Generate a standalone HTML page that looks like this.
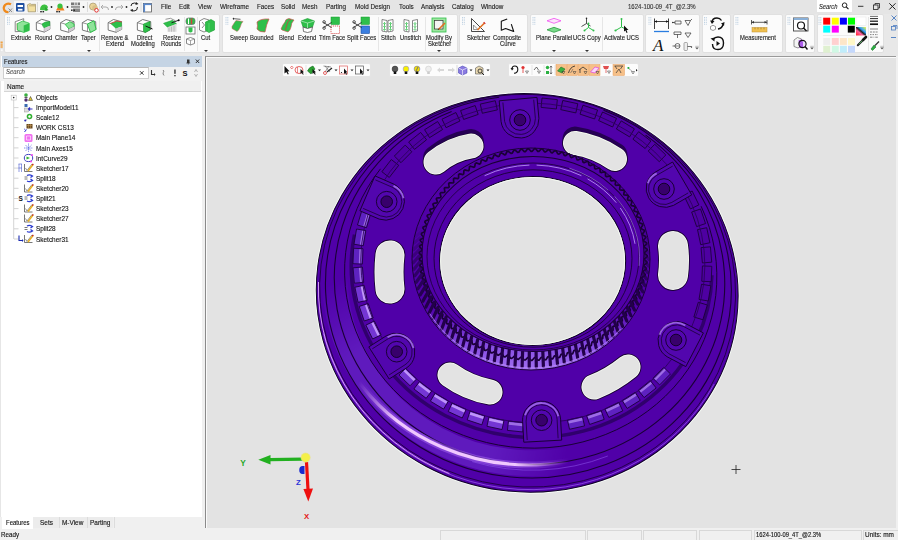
<!DOCTYPE html>
<html><head><meta charset="utf-8">
<style>
*{margin:0;padding:0;box-sizing:border-box}
html,body{width:898px;height:540px;overflow:hidden;background:#f0f0f0;font-family:"Liberation Sans",sans-serif;color:#222}
body{position:relative}
.a{position:absolute}
.t{position:absolute;white-space:nowrap;font-size:7px;line-height:8px;color:#111;-webkit-text-stroke:0.12px #111;transform:scaleX(.92);transform-origin:0 0}
.m{position:absolute;white-space:nowrap;font-size:7px;line-height:8px;color:#1a1a1a;-webkit-text-stroke:0.12px #1a1a1a;top:3.2px;transform:scaleX(.9);transform-origin:0 0}
.rl{position:absolute;white-space:nowrap;font-size:6.7px;line-height:8px;color:#1a1a1a;-webkit-text-stroke:0.12px #1a1a1a;transform:scaleX(.88);transform-origin:0 0}
#top{left:0;top:0;width:898px;height:14px;background:#e5e5e5}
#ribbon{left:0;top:13.5px;width:898px;height:42.5px;background:#e8e8e8}
.pn{position:absolute;top:14.3px;height:38.6px;background:#fbfbfb;border:1px solid #e0e0e0;border-radius:2px}
.sep{position:absolute;width:1px;background:#e6e6e6}
.grip{position:absolute;top:17px;width:3px;height:8px;border-left:1px dotted #9ab;border-right:1px dotted #9ab}
.dd{position:absolute;width:0;height:0;border-left:2px solid transparent;border-right:2px solid transparent;border-top:2px solid #333}
#panel{left:0;top:56px;width:202px;height:461px;background:#fff;border-left:1px solid #e6e6e6}
#vp{left:204.5px;top:56px;width:691.5px;height:472.5px;background:#e3e3e3;border-left:1.6px solid #8a8a8a;border-top:1.6px solid #9a9a9a;box-shadow:inset 1px 1px 0 #fafafa}
#status{left:0;top:528px;width:898px;height:12px;background:#f0f0f0}
.tree .t{left:35.5px}
.cell{position:absolute;top:530px;height:10px;border:1px solid #d8d8d8;border-bottom:none;background:#f0f0f0}
.tb{position:absolute;top:63px;height:14px;background:#fcfcfc;border:1px solid #e4e4e4;border-radius:2px}
</style></head><body>
<div id="top" class="a"></div>
<div id="ribbon" class="a"></div>
<div id="panel" class="a"></div>
<div id="vp" class="a"></div>
<div id="status" class="a"></div>

<!-- top menu -->
<div class="a" style="left:14px;top:1px;width:138px;height:12px;background:#f6f6f6"></div>
<div class="m" style="left:161.2px">File</div>
<div class="m" style="left:179px">Edit</div>
<div class="m" style="left:197.8px">View</div>
<div class="m" style="left:219.6px">Wireframe</div>
<div class="m" style="left:257px">Faces</div>
<div class="m" style="left:280.8px">Solid</div>
<div class="m" style="left:302.4px">Mesh</div>
<div class="m" style="left:326px">Parting</div>
<div class="m" style="left:354.5px">Mold Design</div>
<div class="m" style="left:399px">Tools</div>
<div class="m" style="left:420.6px">Analysis</div>
<div class="m" style="left:451.8px">Catalog</div>
<div class="m" style="left:481.4px">Window</div>
<div class="m" style="left:628.4px;font-size:6.7px;color:#444">1624-100-09_4T_@2.3%</div>
<div class="a" style="left:817px;top:0;width:35px;height:12px;background:#fff"></div>
<div class="m" style="left:818.6px;font-size:6.45px;font-style:italic;color:#333">Search</div>

<!-- ribbon panels -->
<div class="pn" style="left:4px;width:216px"></div>
<div class="pn" style="left:221.6px;width:236px"></div>
<div class="pn" style="left:459.4px;width:68.5px"></div>
<div class="pn" style="left:529.5px;width:114px"></div>
<div class="pn" style="left:645.3px;width:54.5px"></div>
<div class="pn" style="left:701.6px;width:29px"></div>
<div class="pn" style="left:733.1px;width:49.5px"></div>
<div class="pn" style="left:784.8px;width:30.4px"></div>
<div class="pn" style="left:817px;width:67px"></div>
<div class="sep" style="left:98.6px;top:17px;height:34px"></div>
<div class="sep" style="left:183.6px;top:17px;height:34px"></div>
<div class="sep" style="left:196.7px;top:17px;height:34px"></div>
<div class="sep" style="left:377.9px;top:17px;height:34px"></div>
<div class="sep" style="left:424.7px;top:17px;height:34px"></div>
<div class="sep" style="left:602.1px;top:17px;height:34px"></div>
<div class="sep" style="left:868px;top:17px;height:34px"></div>

<div class="rl" style="left:11.4px;top:33.8px">Extrude</div>
<div class="rl" style="left:34.5px;top:33.8px">Round</div>
<div class="rl" style="left:54.8px;top:33.8px">Chamfer</div>
<div class="rl" style="left:81.3px;top:33.8px">Taper</div>
<div class="rl" style="left:100.8px;top:33.8px">Remove &amp;</div>
<div class="rl" style="left:105.9px;top:40.3px">Extend</div>
<div class="rl" style="left:136.7px;top:33.8px">Direct</div>
<div class="rl" style="left:131.2px;top:40.3px">Modeling</div>
<div class="rl" style="left:162.7px;top:33.8px">Resize</div>
<div class="rl" style="left:160.8px;top:40.3px">Rounds</div>
<div class="rl" style="left:201.4px;top:33.8px">Cut</div>
<div class="rl" style="left:229.6px;top:33.8px">Sweep</div>
<div class="rl" style="left:250px;top:33.8px">Bounded</div>
<div class="rl" style="left:278.8px;top:33.8px">Blend</div>
<div class="rl" style="left:297.9px;top:33.8px">Extend</div>
<div class="rl" style="left:319.3px;top:33.8px">Trim Face</div>
<div class="rl" style="left:347.2px;top:33.8px">Split Faces</div>
<div class="rl" style="left:380.8px;top:33.8px">Stitch</div>
<div class="rl" style="left:399.6px;top:33.8px">Unstitch</div>
<div class="rl" style="left:426.1px;top:33.8px">Modify By</div>
<div class="rl" style="left:427.6px;top:40.3px">Sketcher</div>
<div class="rl" style="left:466.6px;top:33.8px">Sketcher</div>
<div class="rl" style="left:492.9px;top:33.8px">Composite</div>
<div class="rl" style="left:499.9px;top:40.3px">Curve</div>
<div class="rl" style="left:536px;top:33.8px">Plane Parallel</div>
<div class="rl" style="left:572.9px;top:33.8px">UCS Copy</div>
<div class="rl" style="left:604.4px;top:33.8px">Activate UCS</div>
<div class="rl" style="left:740px;top:33.8px">Measurement</div>

<div class="dd" style="left:41.5px;top:50px"></div>
<div class="dd" style="left:87px;top:50px"></div>
<div class="dd" style="left:204px;top:50px"></div>
<div class="dd" style="left:437px;top:50px"></div>
<div class="dd" style="left:552px;top:50px"></div>
<div class="dd" style="left:585px;top:50px"></div>

<!-- features panel -->
<div class="a" style="left:1.5px;top:56.3px;width:200.4px;height:10.4px;background:#c5d4e4"></div>
<div class="t" style="left:3.7px;top:57.8px;font-size:6.5px;color:#1a1a1a">Features</div>
<div class="a" style="left:0;top:66.7px;width:202px;height:14.5px;background:#f2f2f2"></div>
<div class="a" style="left:2.5px;top:67.3px;width:146px;height:11.5px;background:#fff;border:1px solid #cfcfcf;border-top-color:#b8b8b8"></div>
<div class="t" style="left:5.5px;top:68.3px;font-size:6.5px;font-style:italic;color:#777">Search</div>
<div class="a" style="left:3.7px;top:81.4px;width:197px;height:10.4px;background:#f0f0f0;border-bottom:1px solid #d5d5d5"></div>
<div class="t" style="left:6.7px;top:83px;font-size:7px;color:#1a1a1a">Name</div>

<div class="tree">
<div class="t" style="top:94.1px">Objects</div>
<div class="t" style="top:104.2px">ImportModel11</div>
<div class="t" style="top:114.4px">Scale12</div>
<div class="t" style="top:124.2px">WORK CS13</div>
<div class="t" style="top:134.3px">Main Plane14</div>
<div class="t" style="top:144.5px">Main Axes15</div>
<div class="t" style="top:154.6px">IntCurve29</div>
<div class="t" style="top:164.7px">Sketcher17</div>
<div class="t" style="top:174.8px">Split18</div>
<div class="t" style="top:184.9px">Sketcher20</div>
<div class="t" style="top:195.1px">Split21</div>
<div class="t" style="top:205.2px">Sketcher23</div>
<div class="t" style="top:215.3px">Sketcher27</div>
<div class="t" style="top:225.4px">Split28</div>
<div class="t" style="top:235.6px">Sketcher31</div>
</div>

<!-- bottom tabs -->
<div class="a" style="left:1.8px;top:517px;width:31.5px;height:11.5px;background:#fff"></div>
<div class="a" style="left:33.3px;top:517px;width:80.2px;height:11px;background:#ececec"></div>
<div class="a" style="left:58.9px;top:517px;width:1px;height:11px;background:#dcdcdc"></div>
<div class="a" style="left:86.5px;top:517px;width:1px;height:11px;background:#dcdcdc"></div>
<div class="a" style="left:113.5px;top:517px;width:1px;height:11px;background:#dcdcdc"></div>
<div class="t" style="left:5.9px;top:519px;font-size:6.5px">Features</div>
<div class="t" style="left:39.6px;top:519px;font-size:7px">Sets</div>
<div class="t" style="left:61.6px;top:519px;font-size:7px">M-View</div>
<div class="t" style="left:90px;top:519px;font-size:7px">Parting</div>

<!-- status bar -->
<div class="t" style="left:1.3px;top:531px;font-size:6.8px">Ready</div>
<div class="cell" style="left:440px;width:146px"></div>
<div class="cell" style="left:587px;width:55px"></div>
<div class="cell" style="left:643px;width:54px"></div>
<div class="cell" style="left:699px;width:53px"></div>
<div class="cell" style="left:753.7px;width:108px"></div>
<div class="cell" style="left:863px;width:40px"></div>
<div class="t" style="left:755.8px;top:531px;font-size:6.3px">1624-100-09_4T_@2.3%</div>
<div class="t" style="left:865px;top:531px;font-size:7px">Units: mm</div>

<!-- view toolbars -->
<div class="tb" style="left:282.2px;width:89px"></div>
<div class="tb" style="left:388.9px;width:102px"></div>
<div class="tb" style="left:508px;width:131px"></div>

<svg class="a" style="left:0;top:0" width="898" height="540" viewBox="0 0 898 540">
<ellipse cx="527.2" cy="292.9" rx="212.0" ry="200.0" transform="rotate(7.40 527.2 292.9)" fill="none" stroke="#f8fff8" stroke-width="1.1" opacity="0.9"/>
<ellipse cx="527.2" cy="292.9" rx="211.1" ry="199.1" transform="rotate(7.40 527.2 292.9)" fill="#5000a8" stroke="#12002a" stroke-width="1"/>
<path d="M714.1 384.1A209.6 197.6 7.36 0 1 323.4 333.6" fill="none" stroke="#9a60f0" stroke-width="0.9" opacity="0.8"/>
<defs><linearGradient id="wg" x1="0" y1="0" x2="1" y2="1"><stop offset="0" stop-color="#6a24c8" stop-opacity="0"/><stop offset="0.45" stop-color="#6a24c8" stop-opacity="0.9"/><stop offset="0.8" stop-color="#5a14b4" stop-opacity="0.5"/><stop offset="1" stop-color="#5a14b4" stop-opacity="0"/></linearGradient></defs>
<defs><linearGradient id="wg2" x1="0" y1="0" x2="1" y2="0"><stop offset="0" stop-color="#7232d2" stop-opacity="0"/><stop offset="0.2" stop-color="#7232d2" stop-opacity="0.9"/><stop offset="0.75" stop-color="#7232d2" stop-opacity="0.9"/><stop offset="1" stop-color="#7232d2" stop-opacity="0"/></linearGradient></defs>
<defs><radialGradient id="mg" gradientUnits="userSpaceOnUse" cx="405" cy="430" r="165"><stop offset="0" stop-color="#fff"/><stop offset="0.55" stop-color="#fff"/><stop offset="1" stop-color="#000"/></radialGradient><mask id="mk" maskUnits="userSpaceOnUse" x="0" y="0" width="898" height="540"><rect width="898" height="540" fill="url(#mg)"/></mask><radialGradient id="mg2" gradientUnits="userSpaceOnUse" cx="455" cy="445" r="115"><stop offset="0" stop-color="#fff"/><stop offset="0.55" stop-color="#fff"/><stop offset="1" stop-color="#000"/></radialGradient><mask id="mk2" maskUnits="userSpaceOnUse" x="0" y="0" width="898" height="540"><rect width="898" height="540" fill="url(#mg2)"/></mask></defs>
<g mask="url(#mk)" opacity="0.6"><path d="M663.5 414.8A194.7 182.6 6.91 1 1 422.1 126.5" fill="none" stroke="#6a2ccc" stroke-width="26"/></g>
<ellipse cx="527.6" cy="290.7" rx="208.2" ry="196.2" transform="rotate(7.31 527.6 290.7)" fill="none" stroke="#1a0036" stroke-width="0.8"/>
<path d="M603.5 110.3A203.1 191.0 7.16 1 1 499.2 97.2" fill="none" stroke="#1a0036" stroke-width="1.1"/>
<path d="M645.6 135.1A195.4 183.3 6.93 1 1 451.6 111.6" fill="none" stroke="#1a0036" stroke-width="1.1"/>
<path d="M701.1 206.2A186.3 174.1 6.65 1 1 380.5 168.8" fill="none" stroke="#1a0036" stroke-width="1.0"/>
<g mask="url(#mk2)"><path d="M632.7 439.5A206.4 189.9 0.00 0 1 326.2 308.0" fill="none" stroke="#9a5ae8" stroke-width="7" opacity="0.6"/><path d="M632.7 439.5A206.4 189.9 0.00 0 1 326.2 308.0" fill="none" stroke="#f0c8ff" stroke-width="3.2"/></g>
<path d="M449.4 473.6A209.3 197.3 7.35 0 1 318.5 282.0" fill="none" stroke="#e8b0ff" stroke-width="1" opacity="0.85"/>
<path d="M607.8 456.0A198.7 186.6 7.03 0 1 472.2 461.6" fill="none" stroke="#8a50e8" stroke-width="1" opacity="0.6"/>
<path d="M711.9 275.2A180.5 168.2 6.48 1 1 354.5 234.6" fill="none" stroke="#30006c" stroke-width="3.5"/>
<g transform="translate(704.9 292.6) rotate(99.5)"><rect x="-7.7" y="-4.7" width="15.4" height="9.4" fill="#4e00a2" stroke="#1a0036" stroke-width="0.8"/></g>
<g transform="translate(700.6 311.0) rotate(106.7)"><rect x="-7.7" y="-4.7" width="15.4" height="9.4" fill="#4e00a2" stroke="#1a0036" stroke-width="0.8"/></g>
<g transform="translate(661.7 376.1) rotate(134.7)"><rect x="-7.7" y="-4.7" width="15.4" height="9.4" fill="#5e22c0" stroke="#1a0036" stroke-width="0.8"/><path d="M-7 2.4H7" stroke="#c8a0ff" stroke-width="2.6" opacity="0.6"/></g>
<g transform="translate(647.2 389.1) rotate(141.4)"><rect x="-7.7" y="-4.7" width="15.4" height="9.4" fill="#5e22c0" stroke="#1a0036" stroke-width="0.8"/><path d="M-7 2.4H7" stroke="#c8a0ff" stroke-width="2.6" opacity="0.6"/></g>
<g transform="translate(631.2 400.4) rotate(148.0)"><rect x="-7.7" y="-4.7" width="15.4" height="9.4" fill="#5e22c0" stroke="#1a0036" stroke-width="0.8"/><path d="M-7 2.4H7" stroke="#c8a0ff" stroke-width="2.6" opacity="0.6"/></g>
<g transform="translate(613.8 409.9) rotate(154.5)"><rect x="-7.7" y="-4.7" width="15.4" height="9.4" fill="#5e22c0" stroke="#1a0036" stroke-width="0.8"/><path d="M-7 2.4H7" stroke="#c8a0ff" stroke-width="2.6" opacity="0.6"/></g>
<g transform="translate(595.4 417.5) rotate(161.0)"><rect x="-7.7" y="-4.7" width="15.4" height="9.4" fill="#5e22c0" stroke="#1a0036" stroke-width="0.8"/><path d="M-7 2.4H7" stroke="#c8a0ff" stroke-width="2.6" opacity="0.6"/></g>
<g transform="translate(576.0 423.0) rotate(167.3)"><rect x="-7.7" y="-4.7" width="15.4" height="9.4" fill="#5e22c0" stroke="#1a0036" stroke-width="0.8"/><path d="M-7 2.4H7" stroke="#c8a0ff" stroke-width="2.6" opacity="0.6"/></g>
<g transform="translate(515.6 426.5) rotate(186.0)"><rect x="-7.7" y="-4.7" width="15.4" height="9.4" fill="#5e22c0" stroke="#1a0036" stroke-width="0.8"/><path d="M-7 2.4H7" stroke="#c8a0ff" stroke-width="2.6" opacity="0.6"/></g>
<g transform="translate(495.5 423.3) rotate(-167.8)"><rect x="-7.7" y="-4.7" width="15.4" height="9.4" fill="#7436d4" stroke="#1a0036" stroke-width="0.8"/><path d="M-7 2.4H7" stroke="#c8a0ff" stroke-width="2.6" opacity="0.9"/></g>
<g transform="translate(476.0 417.9) rotate(-161.6)"><rect x="-7.7" y="-4.7" width="15.4" height="9.4" fill="#7436d4" stroke="#1a0036" stroke-width="0.8"/><path d="M-7 2.4H7" stroke="#c8a0ff" stroke-width="2.6" opacity="0.9"/></g>
<g transform="translate(457.2 410.5) rotate(-155.3)"><rect x="-7.7" y="-4.7" width="15.4" height="9.4" fill="#7436d4" stroke="#1a0036" stroke-width="0.8"/><path d="M-7 2.4H7" stroke="#c8a0ff" stroke-width="2.6" opacity="0.9"/></g>
<g transform="translate(439.4 401.1) rotate(-149.0)"><rect x="-7.7" y="-4.7" width="15.4" height="9.4" fill="#7436d4" stroke="#1a0036" stroke-width="0.8"/><path d="M-7 2.4H7" stroke="#c8a0ff" stroke-width="2.6" opacity="0.9"/></g>
<g transform="translate(422.9 389.9) rotate(-142.6)"><rect x="-7.7" y="-4.7" width="15.4" height="9.4" fill="#7436d4" stroke="#1a0036" stroke-width="0.8"/><path d="M-7 2.4H7" stroke="#c8a0ff" stroke-width="2.6" opacity="0.9"/></g>
<g transform="translate(407.8 377.0) rotate(-136.1)"><rect x="-7.7" y="-4.7" width="15.4" height="9.4" fill="#7436d4" stroke="#1a0036" stroke-width="0.8"/><path d="M-7 2.4H7" stroke="#c8a0ff" stroke-width="2.6" opacity="0.9"/></g>
<g transform="translate(373.5 330.0) rotate(-115.9)"><rect x="-7.7" y="-4.7" width="15.4" height="9.4" fill="#7436d4" stroke="#1a0036" stroke-width="0.8"/><path d="M-7 2.4H7" stroke="#c8a0ff" stroke-width="2.6" opacity="0.9"/></g>
<g transform="translate(366.2 312.2) rotate(-108.9)"><rect x="-7.7" y="-4.7" width="15.4" height="9.4" fill="#7436d4" stroke="#1a0036" stroke-width="0.8"/><path d="M-7 2.4H7" stroke="#c8a0ff" stroke-width="2.6" opacity="0.9"/></g>
<g transform="translate(361.1 293.8) rotate(-101.9)"><rect x="-7.7" y="-4.7" width="15.4" height="9.4" fill="#7436d4" stroke="#1a0036" stroke-width="0.8"/><path d="M-7 2.4H7" stroke="#c8a0ff" stroke-width="2.6" opacity="0.9"/></g>
<g transform="translate(358.4 275.1) rotate(-94.8)"><rect x="-7.7" y="-4.7" width="15.4" height="9.4" fill="#5e22c0" stroke="#1a0036" stroke-width="0.8"/><path d="M-7 2.4H7" stroke="#c8a0ff" stroke-width="2.6" opacity="0.6"/></g>
<g transform="translate(358.0 256.2) rotate(-87.6)"><rect x="-7.7" y="-4.7" width="15.4" height="9.4" fill="#5e22c0" stroke="#1a0036" stroke-width="0.8"/><path d="M-7 2.4H7" stroke="#c8a0ff" stroke-width="2.6" opacity="0.6"/></g>
<g transform="translate(359.9 237.4) rotate(-80.5)"><rect x="-7.7" y="-4.7" width="15.4" height="9.4" fill="#5e22c0" stroke="#1a0036" stroke-width="0.8"/><path d="M-7 2.4H7" stroke="#c8a0ff" stroke-width="2.6" opacity="0.6"/></g>
<g transform="translate(364.2 219.0) rotate(-73.3)"><rect x="-7.7" y="-4.7" width="15.4" height="9.4" fill="#5e22c0" stroke="#1a0036" stroke-width="0.8"/><path d="M-7 2.4H7" stroke="#c8a0ff" stroke-width="2.6" opacity="0.6"/></g>
<g transform="translate(390.3 168.5) rotate(-52.2)"><rect x="-7.7" y="-4.7" width="15.4" height="9.4" fill="#4e00a2" stroke="#1a0036" stroke-width="0.8"/></g>
<g transform="translate(403.1 153.9) rotate(-45.3)"><rect x="-7.7" y="-4.7" width="15.4" height="9.4" fill="#4e00a2" stroke="#1a0036" stroke-width="0.8"/></g>
<g transform="translate(417.6 140.9) rotate(-38.6)"><rect x="-7.7" y="-4.7" width="15.4" height="9.4" fill="#4e00a2" stroke="#1a0036" stroke-width="0.8"/></g>
<g transform="translate(433.6 129.6) rotate(-32.0)"><rect x="-7.7" y="-4.7" width="15.4" height="9.4" fill="#4e00a2" stroke="#1a0036" stroke-width="0.8"/></g>
<g transform="translate(451.0 120.1) rotate(-25.5)"><rect x="-7.7" y="-4.7" width="15.4" height="9.4" fill="#4e00a2" stroke="#1a0036" stroke-width="0.8"/></g>
<g transform="translate(469.4 112.5) rotate(-19.0)"><rect x="-7.7" y="-4.7" width="15.4" height="9.4" fill="#4e00a2" stroke="#1a0036" stroke-width="0.8"/></g>
<g transform="translate(488.8 107.0) rotate(-12.7)"><rect x="-7.7" y="-4.7" width="15.4" height="9.4" fill="#4e00a2" stroke="#1a0036" stroke-width="0.8"/></g>
<g transform="translate(549.2 103.5) rotate(6.0)"><rect x="-7.7" y="-4.7" width="15.4" height="9.4" fill="#4e00a2" stroke="#1a0036" stroke-width="0.8"/></g>
<g transform="translate(569.3 106.7) rotate(12.2)"><rect x="-7.7" y="-4.7" width="15.4" height="9.4" fill="#4e00a2" stroke="#1a0036" stroke-width="0.8"/></g>
<g transform="translate(588.8 112.1) rotate(18.4)"><rect x="-7.7" y="-4.7" width="15.4" height="9.4" fill="#4e00a2" stroke="#1a0036" stroke-width="0.8"/></g>
<g transform="translate(607.6 119.5) rotate(24.7)"><rect x="-7.7" y="-4.7" width="15.4" height="9.4" fill="#4e00a2" stroke="#1a0036" stroke-width="0.8"/></g>
<g transform="translate(625.4 128.9) rotate(31.0)"><rect x="-7.7" y="-4.7" width="15.4" height="9.4" fill="#4e00a2" stroke="#1a0036" stroke-width="0.8"/></g>
<g transform="translate(641.9 140.1) rotate(37.4)"><rect x="-7.7" y="-4.7" width="15.4" height="9.4" fill="#4e00a2" stroke="#1a0036" stroke-width="0.8"/></g>
<g transform="translate(657.0 153.0) rotate(43.9)"><rect x="-7.7" y="-4.7" width="15.4" height="9.4" fill="#4e00a2" stroke="#1a0036" stroke-width="0.8"/></g>
<g transform="translate(691.3 200.0) rotate(64.1)"><rect x="-7.7" y="-4.7" width="15.4" height="9.4" fill="#4e00a2" stroke="#1a0036" stroke-width="0.8"/></g>
<g transform="translate(698.6 217.8) rotate(71.1)"><rect x="-7.7" y="-4.7" width="15.4" height="9.4" fill="#4e00a2" stroke="#1a0036" stroke-width="0.8"/></g>
<g transform="translate(703.7 236.2) rotate(78.1)"><rect x="-7.7" y="-4.7" width="15.4" height="9.4" fill="#4e00a2" stroke="#1a0036" stroke-width="0.8"/></g>
<g transform="translate(706.4 254.9) rotate(85.2)"><rect x="-7.7" y="-4.7" width="15.4" height="9.4" fill="#4e00a2" stroke="#1a0036" stroke-width="0.8"/></g>
<g transform="translate(706.8 273.8) rotate(92.4)"><rect x="-7.7" y="-4.7" width="15.4" height="9.4" fill="#4e00a2" stroke="#1a0036" stroke-width="0.8"/></g>
<ellipse cx="532.8" cy="263.0" rx="172.2" ry="159.8" transform="rotate(6.22 532.8 263.0)" fill="none" stroke="#2a005a" stroke-width="0.8"/>
<path d="M436 162Q452,149 471 146" stroke="#1a0036" stroke-width="26.8" stroke-linecap="round" fill="none"/>
<path d="M436 162Q452,149 471 146" stroke="#260054" stroke-width="26" stroke-linecap="round" fill="none" transform="translate(0 -4)"/>
<path d="M436 162Q452,149 471 146" stroke="#1a0036" stroke-width="25.8" stroke-linecap="round" fill="none"/>
<path d="M436 162Q452,149 471 146" stroke="#f6fbf2" stroke-width="25" stroke-linecap="round" fill="none"/>
<path d="M436 162Q452,149 471 146" stroke="#e3e3e3" stroke-width="23.4" stroke-linecap="round" fill="none"/>
<path d="M575 143Q596,146 615 159" stroke="#1a0036" stroke-width="25.8" stroke-linecap="round" fill="none"/>
<path d="M575 143Q596,146 615 159" stroke="#260054" stroke-width="25" stroke-linecap="round" fill="none" transform="translate(0 -4)"/>
<path d="M575 143Q596,146 615 159" stroke="#1a0036" stroke-width="24.8" stroke-linecap="round" fill="none"/>
<path d="M575 143Q596,146 615 159" stroke="#f6fbf2" stroke-width="24" stroke-linecap="round" fill="none"/>
<path d="M575 143Q596,146 615 159" stroke="#e3e3e3" stroke-width="22.4" stroke-linecap="round" fill="none"/>
<path d="M390 255Q388,272 390 289" stroke="#1a0036" stroke-width="30.8" stroke-linecap="round" fill="none"/>
<path d="M390 255Q388,272 390 289" stroke="#f6fbf2" stroke-width="29" stroke-linecap="round" fill="none"/>
<path d="M390 255Q388,272 390 289" stroke="#e3e3e3" stroke-width="27.4" stroke-linecap="round" fill="none"/>
<path d="M673 246Q675,260 673 275" stroke="#1a0036" stroke-width="31.8" stroke-linecap="round" fill="none"/>
<path d="M673 246Q675,260 673 275" stroke="#f6fbf2" stroke-width="30" stroke-linecap="round" fill="none"/>
<path d="M673 246Q675,260 673 275" stroke="#e3e3e3" stroke-width="28.4" stroke-linecap="round" fill="none"/>
<path d="M450 375Q468,388 490 392" stroke="#1a0036" stroke-width="26.8" stroke-linecap="round" fill="none"/>
<path d="M450 375Q468,388 490 392" stroke="#f6fbf2" stroke-width="25" stroke-linecap="round" fill="none"/>
<path d="M450 375Q468,388 490 392" stroke="#e3e3e3" stroke-width="23.4" stroke-linecap="round" fill="none"/>
<path d="M594 387Q612,380 628 367" stroke="#1a0036" stroke-width="26.8" stroke-linecap="round" fill="none"/>
<path d="M594 387Q612,380 628 367" stroke="#f6fbf2" stroke-width="25" stroke-linecap="round" fill="none"/>
<path d="M594 387Q612,380 628 367" stroke="#e3e3e3" stroke-width="23.4" stroke-linecap="round" fill="none"/>
<path d="M537.0 97.4L538.9 118.3A19 19 0 0 1 501.1 121.7L499.2 100.8Z" fill="#5206ae" stroke="#1a0036" stroke-width="1"/>
<path d="M533.7 99.7L535.4 118.6A15.5 15.5 0 0 1 504.6 121.4L502.9 102.5" fill="none" stroke="#1a0036" stroke-width="0.8"/>
<circle cx="520" cy="120" r="10.3" fill="none" stroke="#1a0036" stroke-width="1"/>
<circle cx="520" cy="120" r="5.8" fill="#38006c" stroke="#0e0020" stroke-width="0.9"/>
<path d="M375.0 175.9L394.2 184.3A19 19 0 0 1 379.2 219.1L359.9 210.8Z" fill="#5206ae" stroke="#1a0036" stroke-width="1"/>
<path d="M375.4 179.9L392.9 187.5A15.5 15.5 0 0 1 380.5 215.9L363.1 208.4" fill="none" stroke="#1a0036" stroke-width="0.8"/>
<path d="M393.5 185.9A17.2 17.2 0.00 0 1 403.5 198.2" fill="none" stroke="#b080f4" stroke-width="1.8" opacity="0.75"/>
<circle cx="386.7" cy="201.7" r="10.3" fill="none" stroke="#1a0036" stroke-width="1"/>
<circle cx="386.7" cy="201.7" r="5.8" fill="#38006c" stroke="#0e0020" stroke-width="0.9"/>
<path d="M691.7 194.9L673.5 205.4A19 19 0 0 1 654.5 172.6L672.6 162.0Z" fill="#5206ae" stroke="#1a0036" stroke-width="1"/>
<path d="M688.2 192.9L671.8 202.4A15.5 15.5 0 0 1 656.2 175.6L672.7 166.1" fill="none" stroke="#1a0036" stroke-width="0.8"/>
<path d="M647.8 183.2A17.2 17.2 0.00 0 1 656.7 173.4" fill="none" stroke="#b080f4" stroke-width="1.8" opacity="0.75"/>
<circle cx="664" cy="189" r="10.3" fill="none" stroke="#1a0036" stroke-width="1"/>
<circle cx="664" cy="189" r="5.8" fill="#38006c" stroke="#0e0020" stroke-width="0.9"/>
<path d="M368.8 346.9L386.5 335.7A19 19 0 0 1 406.9 367.7L389.2 379.0Z" fill="#5206ae" stroke="#1a0036" stroke-width="1"/>
<path d="M372.3 348.8L388.4 338.6A15.5 15.5 0 0 1 405.0 364.8L389.0 375.0" fill="none" stroke="#1a0036" stroke-width="0.8"/>
<path d="M387.5 337.2A17.2 17.2 0.00 0 1 413.5 348.0" fill="none" stroke="#b080f4" stroke-width="1.8" opacity="0.75"/>
<circle cx="396.7" cy="351.7" r="10.3" fill="none" stroke="#1a0036" stroke-width="1"/>
<circle cx="396.7" cy="351.7" r="5.8" fill="#38006c" stroke="#0e0020" stroke-width="0.9"/>
<path d="M685.8 366.6L667.2 356.8A19 19 0 0 1 684.8 323.2L703.4 332.9Z" fill="#5206ae" stroke="#1a0036" stroke-width="1"/>
<path d="M685.6 362.6L668.8 353.7A15.5 15.5 0 0 1 683.2 326.3L700.0 335.1" fill="none" stroke="#1a0036" stroke-width="0.8"/>
<path d="M659.6 334.8A17.2 17.2 0.00 0 1 685.3 325.5" fill="none" stroke="#b080f4" stroke-width="1.8" opacity="0.75"/>
<circle cx="676" cy="340" r="10.3" fill="none" stroke="#1a0036" stroke-width="1"/>
<circle cx="676" cy="340" r="5.8" fill="#38006c" stroke="#0e0020" stroke-width="0.9"/>
<path d="M523.8 442.2L522.6 421.3A19 19 0 0 1 560.6 419.1L561.7 440.1Z" fill="#5206ae" stroke="#1a0036" stroke-width="1"/>
<path d="M527.2 440.0L526.1 421.1A15.5 15.5 0 0 1 557.1 419.3L558.1 438.3" fill="none" stroke="#1a0036" stroke-width="0.8"/>
<path d="M525.1 415.2A17.2 17.2 0.00 0 1 558.3 416.3" fill="none" stroke="#b080f4" stroke-width="1.8" opacity="0.75"/>
<circle cx="541.6" cy="420.2" r="10.3" fill="none" stroke="#1a0036" stroke-width="1"/>
<circle cx="541.6" cy="420.2" r="5.8" fill="#38006c" stroke="#0e0020" stroke-width="0.9"/>
<defs><linearGradient id="gg" x1="0" y1="0" x2="0" y2="1"><stop offset="0" stop-color="#5000a8"/><stop offset="0.72" stop-color="#5000a8"/><stop offset="0.88" stop-color="#8448e2"/><stop offset="1" stop-color="#a070f0"/></linearGradient></defs>
<ellipse cx="531.0" cy="259.0" rx="119.0" ry="111.0" fill="url(#gg)" stroke="#1a0036" stroke-width="1"/>
<path d="M646.0 254.5L647.3 255.6L647.3 256.6L645.9 257.7L644.6 258.7L644.6 259.7L645.8 260.8L647.0 262.0L646.9 263.0L645.5 264.0L644.1 264.9L644.0 265.9L645.2 267.1L646.3 268.3L646.2 269.4L644.7 270.2L643.3 271.1L643.1 272.1L644.2 273.3L645.2 274.6L645.0 275.7L643.5 276.4L642.0 277.2L641.7 278.2L642.7 279.5L643.7 280.9L643.4 281.9L641.9 282.6L640.3 283.2L640.0 284.2L640.9 285.6L641.8 287.0L641.4 288.0L639.8 288.6L638.2 289.1L637.9 290.1L638.7 291.6L639.5 293.0L639.1 294.0L637.4 294.5L635.8 295.0L635.3 295.9L636.1 297.4L636.8 298.9L636.3 299.9L634.6 300.2L633.0 300.6L632.5 301.5L633.1 303.1L633.7 304.6L633.2 305.5L631.5 305.8L629.8 306.1L629.2 307.0L629.7 308.6L630.3 310.1L629.7 311.0L627.9 311.2L626.2 311.4L625.6 312.3L626.1 313.9L626.5 315.5L625.8 316.3L624.1 316.4L622.4 316.5L621.7 317.3L622.0 318.9L622.3 320.6L621.6 321.4L619.9 321.4L618.2 321.4L617.4 322.2L617.7 323.8L617.9 325.5L617.1 326.2L615.4 326.1L613.6 326.0L612.9 326.7L613.0 328.4L613.1 330.1L612.3 330.8L610.5 330.6L608.8 330.4L608.0 331.1L608.0 332.7L608.0 334.4L607.2 335.1L605.5 334.8L603.8 334.4L602.9 335.1L602.8 336.8L602.7 338.4L601.8 339.1L600.1 338.7L598.4 338.2L597.5 338.8L597.3 340.5L597.1 342.2L596.2 342.8L594.5 342.3L592.8 341.7L591.9 342.3L591.6 343.9L591.3 345.6L590.3 346.1L588.7 345.5L587.0 344.9L586.1 345.4L585.7 347.0L585.3 348.7L584.2 349.2L582.6 348.5L581.1 347.7L580.0 348.2L579.6 349.8L579.0 351.4L578.0 351.8L576.4 351.0L574.9 350.2L573.9 350.6L573.3 352.2L572.6 353.8L571.6 354.2L570.1 353.3L568.6 352.4L567.5 352.7L566.8 354.3L566.1 355.8L565.0 356.1L563.6 355.2L562.1 354.2L561.0 354.4L560.3 356.0L559.5 357.5L558.3 357.7L557.0 356.7L555.6 355.6L554.5 355.8L553.6 357.3L552.7 358.8L551.6 358.9L550.3 357.8L549.0 356.7L547.8 356.8L546.9 358.2L545.9 359.7L544.8 359.8L543.5 358.6L542.3 357.4L541.1 357.4L540.1 358.8L539.0 360.2L537.9 360.2L536.7 359.0L535.5 357.7L534.4 357.7L533.3 359.0L532.2 360.3L531.0 360.3L529.9 359.0L528.8 357.6L527.7 357.6L526.5 358.8L525.3 360.0L524.1 360.0L523.1 358.6L522.1 357.2L521.0 357.1L519.7 358.2L518.4 359.4L517.3 359.2L516.3 357.8L515.4 356.4L514.3 356.2L513.0 357.3L511.6 358.4L510.5 358.2L509.6 356.7L508.8 355.2L507.7 354.9L506.3 356.0L504.9 357.0L503.8 356.7L503.0 355.2L502.3 353.6L501.2 353.3L499.8 354.3L498.3 355.2L497.2 354.9L496.5 353.3L495.9 351.7L494.8 351.4L493.3 352.2L491.8 353.0L490.7 352.6L490.2 351.0L489.6 349.4L488.6 349.0L487.0 349.8L485.5 350.5L484.4 350.1L484.0 348.5L483.5 346.8L482.5 346.4L480.9 347.0L479.3 347.7L478.3 347.2L477.9 345.5L477.6 343.9L476.6 343.4L475.0 343.9L473.3 344.5L472.4 343.9L472.1 342.3L471.9 340.6L470.9 340.0L469.3 340.5L467.6 341.0L466.7 340.3L466.5 338.7L466.4 337.0L465.5 336.4L463.8 336.8L462.1 337.1L461.2 336.5L461.1 334.8L461.1 333.1L460.3 332.4L458.6 332.7L456.8 333.0L456.0 332.3L456.1 330.6L456.1 328.9L455.3 328.2L453.6 328.4L451.9 328.6L451.1 327.8L451.2 326.1L451.4 324.5L450.7 323.7L448.9 323.8L447.2 323.9L446.5 323.0L446.7 321.4L447.0 319.8L446.3 319.0L444.6 318.9L442.9 318.9L442.2 318.1L442.5 316.4L442.9 314.8L442.3 314.0L440.5 313.9L438.8 313.7L438.2 312.8L438.7 311.2L439.1 309.7L438.6 308.8L436.9 308.6L435.2 308.3L434.6 307.4L435.1 305.8L435.7 304.3L435.2 303.4L433.5 303.1L431.8 302.7L431.3 301.8L432.0 300.2L432.7 298.7L432.2 297.8L430.5 297.4L428.9 296.9L428.4 296.0L429.2 294.5L430.0 293.0L429.5 292.1L427.9 291.6L426.3 291.0L425.9 290.0L426.8 288.6L427.6 287.2L427.3 286.2L425.7 285.6L424.1 285.0L423.8 283.9L424.7 282.6L425.7 281.2L425.4 280.2L423.9 279.5L422.3 278.8L422.1 277.7L423.1 276.4L424.2 275.1L423.9 274.1L422.4 273.3L421.0 272.5L420.8 271.5L421.9 270.2L423.0 269.0L422.9 268.0L421.4 267.1L420.0 266.2L419.9 265.1L421.1 264.0L422.3 262.8L422.2 261.8L420.8 260.8L419.4 259.8L419.4 258.8L420.7 257.7L421.9 256.6L421.9 255.5L420.6 254.5L419.3 253.4L419.3 252.4L420.7 251.3L422.0 250.3L422.0 249.3L420.8 248.2L419.6 247.0L419.7 246.0L421.1 245.0L422.5 244.1L422.6 243.1L421.4 241.9L420.3 240.7L420.4 239.6L421.9 238.8L423.3 237.9L423.5 236.9L422.4 235.7L421.4 234.4L421.6 233.3L423.1 232.6L424.6 231.8L424.9 230.8L423.9 229.5L422.9 228.1L423.2 227.1L424.7 226.4L426.3 225.8L426.6 224.8L425.7 223.4L424.8 222.0L425.2 221.0L426.8 220.4L428.4 219.9L428.7 218.9L427.9 217.4L427.1 216.0L427.5 215.0L429.2 214.5L430.8 214.0L431.3 213.1L430.5 211.6L429.8 210.1L430.3 209.1L432.0 208.8L433.6 208.4L434.1 207.5L433.5 205.9L432.9 204.4L433.4 203.5L435.1 203.2L436.8 202.9L437.4 202.0L436.9 200.4L436.3 198.9L436.9 198.0L438.7 197.8L440.4 197.6L441.0 196.7L440.5 195.1L440.1 193.5L440.8 192.7L442.5 192.6L444.2 192.5L444.9 191.7L444.6 190.1L444.3 188.4L445.0 187.6L446.7 187.6L448.4 187.6L449.2 186.8L448.9 185.2L448.7 183.5L449.5 182.8L451.2 182.9L453.0 183.0L453.7 182.3L453.6 180.6L453.5 178.9L454.3 178.2L456.1 178.4L457.8 178.6L458.6 177.9L458.6 176.3L458.6 174.6L459.4 173.9L461.1 174.2L462.8 174.6L463.7 173.9L463.8 172.2L463.9 170.6L464.8 169.9L466.5 170.3L468.2 170.8L469.1 170.2L469.3 168.5L469.5 166.8L470.4 166.2L472.1 166.7L473.8 167.3L474.7 166.7L475.0 165.1L475.3 163.4L476.3 162.9L477.9 163.5L479.6 164.1L480.5 163.6L480.9 162.0L481.3 160.3L482.4 159.8L484.0 160.5L485.5 161.3L486.6 160.8L487.0 159.2L487.6 157.6L488.6 157.2L490.2 158.0L491.7 158.8L492.7 158.4L493.3 156.8L494.0 155.2L495.0 154.8L496.5 155.7L498.0 156.6L499.1 156.3L499.8 154.7L500.5 153.2L501.6 152.9L503.0 153.8L504.5 154.8L505.6 154.6L506.3 153.0L507.1 151.5L508.3 151.3L509.6 152.3L511.0 153.4L512.1 153.2L513.0 151.7L513.9 150.2L515.0 150.1L516.3 151.2L517.6 152.3L518.8 152.2L519.7 150.8L520.7 149.3L521.8 149.2L523.1 150.4L524.3 151.6L525.5 151.6L526.5 150.2L527.6 148.8L528.7 148.8L529.9 150.0L531.1 151.3L532.2 151.3L533.3 150.0L534.4 148.7L535.6 148.7L536.7 150.0L537.8 151.4L538.9 151.4L540.1 150.2L541.3 149.0L542.5 149.0L543.5 150.4L544.5 151.8L545.6 151.9L546.9 150.8L548.2 149.6L549.3 149.8L550.3 151.2L551.2 152.6L552.3 152.8L553.6 151.7L555.0 150.6L556.1 150.8L557.0 152.3L557.8 153.8L558.9 154.1L560.3 153.0L561.7 152.0L562.8 152.3L563.6 153.8L564.3 155.4L565.4 155.7L566.8 154.7L568.3 153.8L569.4 154.1L570.1 155.7L570.7 157.3L571.8 157.6L573.3 156.8L574.8 156.0L575.9 156.4L576.4 158.0L577.0 159.6L578.0 160.0L579.6 159.2L581.1 158.5L582.2 158.9L582.6 160.5L583.1 162.2L584.1 162.6L585.7 162.0L587.3 161.3L588.3 161.8L588.7 163.5L589.0 165.1L590.0 165.6L591.6 165.1L593.3 164.5L594.2 165.1L594.5 166.7L594.7 168.4L595.7 169.0L597.3 168.5L599.0 168.0L599.9 168.7L600.1 170.3L600.2 172.0L601.1 172.6L602.8 172.2L604.5 171.9L605.4 172.5L605.5 174.2L605.5 175.9L606.3 176.6L608.0 176.3L609.8 176.0L610.6 176.7L610.5 178.4L610.5 180.1L611.3 180.8L613.0 180.6L614.7 180.4L615.5 181.2L615.4 182.9L615.2 184.5L615.9 185.3L617.7 185.2L619.4 185.1L620.1 186.0L619.9 187.6L619.6 189.2L620.3 190.0L622.0 190.1L623.7 190.1L624.4 190.9L624.1 192.6L623.7 194.2L624.3 195.0L626.1 195.1L627.8 195.3L628.4 196.2L627.9 197.8L627.5 199.3L628.0 200.2L629.7 200.4L631.4 200.7L632.0 201.6L631.5 203.2L630.9 204.7L631.4 205.6L633.1 205.9L634.8 206.3L635.3 207.2L634.6 208.8L633.9 210.3L634.4 211.2L636.1 211.6L637.7 212.1L638.2 213.0L637.4 214.5L636.6 216.0L637.1 216.9L638.7 217.4L640.3 218.0L640.7 219.0L639.8 220.4L639.0 221.8L639.3 222.8L640.9 223.4L642.5 224.0L642.8 225.1L641.9 226.4L640.9 227.8L641.2 228.8L642.7 229.5L644.3 230.2L644.5 231.3L643.5 232.6L642.4 233.9L642.7 234.9L644.2 235.7L645.6 236.5L645.8 237.5L644.7 238.8L643.6 240.0L643.7 241.0L645.2 241.9L646.6 242.8L646.7 243.9L645.5 245.0L644.3 246.2L644.4 247.2L645.8 248.2L647.2 249.2L647.2 250.2L645.9 251.3L644.7 252.4L644.7 253.5Z" fill="none" stroke="#1a0036" stroke-width="1.7" stroke-linejoin="round"/>
<path d="M642.8 252.9L648.8 259.4" stroke="#22004a" stroke-width="3.2" stroke-linecap="round" opacity="0.47"/>
<path d="M642.5 258.9L648.5 266.0" stroke="#22004a" stroke-width="3.2" stroke-linecap="round" opacity="0.55"/>
<path d="M641.8 265.0L647.7 272.5" stroke="#22004a" stroke-width="3.2" stroke-linecap="round" opacity="0.63"/>
<path d="M640.7 271.0L646.5 279.0" stroke="#22004a" stroke-width="3.2" stroke-linecap="round" opacity="0.72"/>
<path d="M639.1 276.9L644.9 285.5" stroke="#22004a" stroke-width="3.2" stroke-linecap="round" opacity="0.80"/>
<path d="M637.2 282.7L642.9 291.8" stroke="#22004a" stroke-width="3.2" stroke-linecap="round" opacity="0.88"/>
<path d="M634.9 288.5L640.5 298.0" stroke="#22004a" stroke-width="3.2" stroke-linecap="round" opacity="0.96"/>
<path d="M632.2 294.0L637.7 304.1" stroke="#22004a" stroke-width="3.2" stroke-linecap="round" opacity="1.00"/>
<path d="M629.2 299.5L634.5 310.0" stroke="#22004a" stroke-width="3.2" stroke-linecap="round" opacity="1.00"/>
<path d="M625.8 304.7L630.9 315.7" stroke="#22004a" stroke-width="3.2" stroke-linecap="round" opacity="1.00"/>
<path d="M622.0 309.8L626.9 321.2" stroke="#22004a" stroke-width="3.2" stroke-linecap="round" opacity="1.00"/>
<path d="M618.0 314.6L622.6 326.4" stroke="#22004a" stroke-width="3.2" stroke-linecap="round" opacity="1.00"/>
<path d="M613.6 319.2L618.0 331.4" stroke="#22004a" stroke-width="3.2" stroke-linecap="round" opacity="1.00"/>
<path d="M608.9 323.6L613.0 336.2" stroke="#22004a" stroke-width="3.2" stroke-linecap="round" opacity="1.00"/>
<path d="M603.9 327.7L607.8 340.6" stroke="#22004a" stroke-width="3.2" stroke-linecap="round" opacity="1.00"/>
<path d="M598.6 331.5L602.2 344.8" stroke="#22004a" stroke-width="3.2" stroke-linecap="round" opacity="1.00"/>
<path d="M593.1 335.0L596.4 348.6" stroke="#22004a" stroke-width="3.2" stroke-linecap="round" opacity="1.00"/>
<path d="M587.4 338.3L590.4 352.1" stroke="#22004a" stroke-width="3.2" stroke-linecap="round" opacity="1.00"/>
<path d="M581.5 341.2L584.2 355.2" stroke="#22004a" stroke-width="3.2" stroke-linecap="round" opacity="1.00"/>
<path d="M575.3 343.7L577.7 358.0" stroke="#22004a" stroke-width="3.2" stroke-linecap="round" opacity="1.00"/>
<path d="M569.1 346.0L571.1 360.5" stroke="#22004a" stroke-width="3.2" stroke-linecap="round" opacity="1.00"/>
<path d="M562.6 347.9L564.3 362.5" stroke="#22004a" stroke-width="3.2" stroke-linecap="round" opacity="1.00"/>
<path d="M556.1 349.4L557.5 364.2" stroke="#22004a" stroke-width="3.2" stroke-linecap="round" opacity="1.00"/>
<path d="M549.5 350.6L550.5 365.5" stroke="#22004a" stroke-width="3.2" stroke-linecap="round" opacity="1.00"/>
<path d="M542.8 351.4L543.4 366.4" stroke="#22004a" stroke-width="3.2" stroke-linecap="round" opacity="1.00"/>
<path d="M536.1 351.9L536.3 366.9" stroke="#22004a" stroke-width="3.2" stroke-linecap="round" opacity="1.00"/>
<path d="M529.3 352.0L529.2 367.0" stroke="#22004a" stroke-width="3.2" stroke-linecap="round" opacity="1.00"/>
<path d="M522.6 351.7L522.1 366.7" stroke="#22004a" stroke-width="3.2" stroke-linecap="round" opacity="1.00"/>
<path d="M515.8 351.1L515.0 366.0" stroke="#22004a" stroke-width="3.2" stroke-linecap="round" opacity="1.00"/>
<path d="M509.2 350.1L508.0 364.9" stroke="#22004a" stroke-width="3.2" stroke-linecap="round" opacity="1.00"/>
<path d="M502.6 348.7L501.1 363.4" stroke="#22004a" stroke-width="3.2" stroke-linecap="round" opacity="1.00"/>
<path d="M496.1 347.0L494.3 361.5" stroke="#22004a" stroke-width="3.2" stroke-linecap="round" opacity="1.00"/>
<path d="M489.8 344.9L487.6 359.3" stroke="#22004a" stroke-width="3.2" stroke-linecap="round" opacity="1.00"/>
<path d="M483.6 342.5L481.0 356.7" stroke="#22004a" stroke-width="3.2" stroke-linecap="round" opacity="1.00"/>
<path d="M477.6 339.8L474.7 353.7" stroke="#22004a" stroke-width="3.2" stroke-linecap="round" opacity="1.00"/>
<path d="M471.7 336.7L468.5 350.4" stroke="#22004a" stroke-width="3.2" stroke-linecap="round" opacity="1.00"/>
<path d="M466.1 333.3L462.6 346.7" stroke="#22004a" stroke-width="3.2" stroke-linecap="round" opacity="1.00"/>
<path d="M460.7 329.6L457.0 342.7" stroke="#22004a" stroke-width="3.2" stroke-linecap="round" opacity="1.00"/>
<path d="M455.6 325.7L451.6 338.4" stroke="#22004a" stroke-width="3.2" stroke-linecap="round" opacity="1.00"/>
<path d="M450.8 321.4L446.5 333.8" stroke="#22004a" stroke-width="3.2" stroke-linecap="round" opacity="1.00"/>
<path d="M446.2 316.9L441.7 328.9" stroke="#22004a" stroke-width="3.2" stroke-linecap="round" opacity="1.00"/>
<path d="M442.0 312.2L437.2 323.8" stroke="#22004a" stroke-width="3.2" stroke-linecap="round" opacity="1.00"/>
<path d="M438.0 307.3L433.1 318.4" stroke="#22004a" stroke-width="3.2" stroke-linecap="round" opacity="1.00"/>
<path d="M434.5 302.1L429.3 312.8" stroke="#22004a" stroke-width="3.2" stroke-linecap="round" opacity="1.00"/>
<path d="M431.2 296.8L425.9 307.0" stroke="#22004a" stroke-width="3.2" stroke-linecap="round" opacity="1.00"/>
<path d="M428.4 291.3L422.9 301.1" stroke="#22004a" stroke-width="3.2" stroke-linecap="round" opacity="1.00"/>
<path d="M425.9 285.6L420.2 294.9" stroke="#22004a" stroke-width="3.2" stroke-linecap="round" opacity="0.92"/>
<path d="M423.8 279.8L418.0 288.7" stroke="#22004a" stroke-width="3.2" stroke-linecap="round" opacity="0.84"/>
<path d="M422.1 274.0L416.2 282.3" stroke="#22004a" stroke-width="3.2" stroke-linecap="round" opacity="0.76"/>
<path d="M420.7 268.0L414.8 275.8" stroke="#22004a" stroke-width="3.2" stroke-linecap="round" opacity="0.68"/>
<path d="M419.8 262.0L413.9 269.3" stroke="#22004a" stroke-width="3.2" stroke-linecap="round" opacity="0.59"/>
<path d="M419.3 255.9L413.3 262.7" stroke="#22004a" stroke-width="3.2" stroke-linecap="round" opacity="0.51"/>
<path d="M419.2 249.8L413.2 256.1" stroke="#22004a" stroke-width="3.2" stroke-linecap="round" opacity="0.42"/>
<path d="M419.5 243.8L413.5 249.5" stroke="#22004a" stroke-width="3.2" stroke-linecap="round" opacity="0.34"/>
<path d="M420.2 237.7L414.3 242.9" stroke="#22004a" stroke-width="3.2" stroke-linecap="round" opacity="0.26"/>
<path d="M421.3 231.7L415.5 236.4" stroke="#22004a" stroke-width="3.2" stroke-linecap="round" opacity="0.17"/>
<path d="M422.9 225.8L417.1 230.0" stroke="#22004a" stroke-width="3.2" stroke-linecap="round" opacity="0.09"/>
<path d="M424.8 220.0L419.1 223.6" stroke="#22004a" stroke-width="3.2" stroke-linecap="round" opacity="0.01"/>
<path d="M638.2 222.9L644.0 226.8" stroke="#22004a" stroke-width="3.2" stroke-linecap="round" opacity="0.05"/>
<path d="M639.9 228.7L645.8 233.2" stroke="#22004a" stroke-width="3.2" stroke-linecap="round" opacity="0.13"/>
<path d="M641.3 234.7L647.2 239.7" stroke="#22004a" stroke-width="3.2" stroke-linecap="round" opacity="0.21"/>
<path d="M642.2 240.7L648.1 246.2" stroke="#22004a" stroke-width="3.2" stroke-linecap="round" opacity="0.30"/>
<path d="M642.7 246.8L648.7 252.8" stroke="#22004a" stroke-width="3.2" stroke-linecap="round" opacity="0.38"/>
<path d="M620.6 329.1A117.0 109.0 0.00 0 1 429.7 313.5" fill="none" stroke="#c090ff" stroke-width="0.9" opacity="0.8"/>
<ellipse cx="533.0" cy="254.0" rx="111.0" ry="97.5" fill="#5000a8" stroke="#1a0036" stroke-width="1.1"/>
<ellipse cx="533.0" cy="256.5" rx="106.0" ry="93.5" fill="none" stroke="#1a0036" stroke-width="0.8"/>
<path d="M484.6 175.7A103.0 91.5 0.00 0 1 529.4 165.1" fill="none" stroke="#c0a0fa" stroke-width="0.9" opacity="0.9"/>
<path d="M536.6 165.1A103.0 91.5 0.00 0 1 581.4 175.7" fill="none" stroke="#c0a0fa" stroke-width="0.9" opacity="0.9"/>
<path d="M587.6 178.9A103.0 91.5 0.00 0 1 616.3 202.7" fill="none" stroke="#c0a0fa" stroke-width="0.9" opacity="0.9"/>
<path d="M620.3 208.0A103.0 91.5 0.00 0 1 635.0 243.8" fill="none" stroke="#c0a0fa" stroke-width="0.9" opacity="0.9"/>
<path d="M569.4 168.2A106.5 95.0 0.00 0 1 608.3 190.3" fill="none" stroke="#b090f0" stroke-width="0.8" opacity="0.7"/>
<path d="M614.6 196.4A106.5 95.0 0.00 0 1 639.1 265.8" fill="none" stroke="#b090f0" stroke-width="0.8" opacity="0.7"/>
<ellipse cx="533.0" cy="258.5" rx="99.0" ry="88.7" fill="none" stroke="#1a0036" stroke-width="0.9"/>
<ellipse cx="532.6" cy="261.0" rx="93.0" ry="84.5" fill="#e3e3e3" stroke="#10002a" stroke-width="1.1"/>
<ellipse cx="532.6" cy="261.0" rx="92.0" ry="83.5" fill="none" stroke="#f6fbf2" stroke-width="1"/>
</svg>
<svg class="a" style="left:0;top:0" width="898" height="540" viewBox="0 0 898 540">
<g transform="translate(14.7 18.2) scale(1)"><path d="M0.5 3.5L9 0.5V13L0.5 13.5Z" fill="#fff" stroke="#6a6a6a" stroke-width="0.8"/><path d="M2.5 5V12" stroke="#d04040" stroke-width="0.7"/><path d="M2.5 5.5L8 2.8L14.5 5V12.3L9 14.2L2.8 12Z" fill="#8fe39a" stroke="#2fbf4a" stroke-width="0.8"/><path d="M9 7.3V14.2L14.5 12.3V5Z" fill="#2fbf4a"/></g>
<g transform="translate(35.5 18.3) scale(1)"><path d="M0.8 4.2L6.2 1L14.2 3.2L14.4 10.8L8.8 13.8L0.9 11.6Z" fill="#fff" stroke="#6a6a6a" stroke-width="0.9" stroke-linejoin="round"/><path d="M0.8 4.2L8.8 6.6L14.2 3.2M8.8 6.6V13.8" fill="none" stroke="#6a6a6a" stroke-width="0.7"/><path d="M6.5 5.8Q9 3 14.2 3.2L14.3 7.5L8.8 9.8Q7 8 6.5 5.8Z" fill="#2fbf4a" stroke="#149a2c" stroke-width="0.5"/><path d="M8.8 9.8L14.3 7.5V10.8L8.8 13.8Z" fill="#d8d0d8"/></g>
<g transform="translate(59.8 18.5) scale(1)"><path d="M0.8 4.2L6.2 1L14.2 3.2L14.4 10.8L8.8 13.8L0.9 11.6Z" fill="#fff" stroke="#6a6a6a" stroke-width="0.9" stroke-linejoin="round"/><path d="M0.8 4.2L8.8 6.6L14.2 3.2M8.8 6.6V13.8" fill="none" stroke="#6a6a6a" stroke-width="0.7"/><path d="M5.5 6L10 3.2L14.2 5.5L14.3 8L9.2 10.5Z" fill="#8fe39a" stroke="#2fbf4a" stroke-width="0.9"/><path d="M9.2 10.5L14.3 8V10.8L8.8 13.8Z" fill="#d0c8d0"/></g>
<g transform="translate(81.5 18.5) scale(1)"><path d="M0.8 4.2L6.2 1L14.2 3.2L14.4 10.8L8.8 13.8L0.9 11.6Z" fill="#fff" stroke="#6a6a6a" stroke-width="0.9" stroke-linejoin="round"/><path d="M0.8 4.2L6 5.6M6 5.6V12.5" fill="none" stroke="#6a6a6a" stroke-width="0.7"/><path d="M5.8 5.6L12.4 2.3L14.6 11L9 13.9Z" fill="#8fe39a" stroke="#2fbf4a" stroke-width="1"/></g>
<g transform="translate(107.3 18.5) scale(1)"><path d="M0.8 4.2L6.2 1L14.2 3.2L14.4 10.8L8.8 13.8L0.9 11.6Z" fill="#fff" stroke="#6a6a6a" stroke-width="0.9" stroke-linejoin="round"/><path d="M0.8 4.2L8.8 6.6L14.2 3.2M8.8 6.6V13.8" fill="none" stroke="#6a6a6a" stroke-width="0.7"/><path d="M3 5L9.5 2.5L14.5 3.5V8L8.5 10Z" fill="#2fbf4a"/><path d="M3 5L9.5 2.5L14.5 3.5" fill="none" stroke="#d04040" stroke-width="0.9"/><path d="M8.8 10V13.8L14.4 10.8V8Z" fill="#ccc"/></g>
<g transform="translate(136.5 18.5) scale(1)"><path d="M0.8 4.2L6.2 1L14.2 3.2L14.4 10.8L8.8 13.8L0.9 11.6Z" fill="#fff" stroke="#6a6a6a" stroke-width="0.9" stroke-linejoin="round"/><path d="M0.8 4.2L8.8 6.6L14.2 3.2M8.8 6.6V13.8" fill="none" stroke="#6a6a6a" stroke-width="0.7"/><path d="M7 5.5L13.5 3V11.5L8.8 14L7 13Z" fill="#2fbf4a" stroke="#149a2c" stroke-width="0.6"/><path d="M9 7.5L16 10.5" stroke="#111" stroke-width="1"/></g>
<g transform="translate(162.5 17.8) scale(1)"><path d="M3 1.5L8 0.5L13 3" fill="none" stroke="#6a6a6a" stroke-width="0.7"/><path d="M1 5.5L10 2.5L14 6L5 9.5Z" fill="#2fbf4a" stroke="#149a2c" stroke-width="0.5"/><path d="M5 9.5L14 6V14L5 14Z" fill="#ddd"/><path d="M6.5 10V14M9 9V14M11.5 8V14" stroke="#999" stroke-width="0.5"/><path d="M9 5L16 2.5" stroke="#111" stroke-width="0.9"/><circle cx="16.2" cy="2.5" r="1" fill="#111"/></g>
<g transform="translate(185.5 17) scale(1)"><rect x="0.5" y="1" width="9" height="6.5" rx="2.5" fill="#2fbf4a" stroke="#6a6a6a" stroke-width="0.7"/><path d="M6 1.5V7" stroke="#d04040" stroke-width="1.5"/><path d="M3 1.5V7" stroke="#fff" stroke-width="1"/></g>
<g transform="translate(185.5 26.5) scale(1)"><rect x="0.5" y="0.5" width="9" height="7" fill="#fff" stroke="#6a6a6a" stroke-width="0.8"/><path d="M3 1V5Q5 7 7 5V1" fill="#2fbf4a"/></g>
<g transform="translate(186 37) scale(1)"><path d="M0.5 2L4.5 0.5L8.5 2V6.5L4.5 8L0.5 6.5Z" fill="#fff" stroke="#6a6a6a" stroke-width="0.8"/><path d="M0.5 2L4.5 3.5L8.5 2M4.5 3.5V8" fill="none" stroke="#6a6a6a" stroke-width="0.6"/></g>
<g transform="translate(199 18) scale(1)"><path d="M0.5 3L5 0.5L10 2V12L5 14L0.5 12Z" fill="#fff" stroke="#6a6a6a" stroke-width="0.8"/><path d="M3 4L5.5 7L3 10" fill="none" stroke="#6a6a6a" stroke-width="0.8"/><path d="M6.5 4L12 1.5L15.5 3.5V12L10 14.5L6.5 12.5Z" fill="#2fbf4a" stroke="#149a2c" stroke-width="0.6"/><path d="M10 5V14.5" stroke="#5ad870" stroke-width="0.8"/></g>
<g transform="translate(231 17.5) scale(1)"><path d="M3 1.2L9.5 1.8" stroke="#222" stroke-width="0.7"/><path d="M3 0L1.5 1.2L3 2.4Z" fill="#222"/><path d="M1 9Q4 4 5 3L12 4Q10 6 9.5 9Q8 13 6 14L1 11Z" fill="#2fbf4a" stroke="#d06060" stroke-width="0.5"/></g>
<g transform="translate(255.5 18) scale(1)"><path d="M1.5 4Q5 0.5 13.5 1Q11 6 9.5 14Q4 14.5 1.5 11Q2.5 8 1.5 4Z" fill="#2fbf4a" stroke="#d05050" stroke-width="0.7"/></g>
<g transform="translate(280 18) scale(1)"><path d="M1 11Q3 6 5 4Q5 1 9 0.5L14 2Q11 5 11 9Q10 13 8 14L2 12Z" fill="#2fbf4a" stroke="#d05050" stroke-width="0.6"/><path d="M5.5 12Q6.5 8 7.5 5Q8.5 2 11 1.5" fill="none" stroke="#c84040" stroke-width="0.8"/></g>
<g transform="translate(300.5 18) scale(1)"><path d="M0.5 3L7 0.5L14 3L12 9L7 10.5L2.5 9Z" fill="#2fbf4a" stroke="#149a2c" stroke-width="0.6"/><path d="M0.5 3L7 5L14 3M7 5V10.5" fill="none" stroke="#bfeec5" stroke-width="0.7"/><path d="M2.5 9L7 10.5L12 9L11 13.5L7 14.5L3 13.5Z" fill="#fff" stroke="#444" stroke-width="0.7"/></g>
<g transform="translate(322.5 16.5) scale(1)"><rect x="8.5" y="0.5" width="8.5" height="7.5" fill="#2fbf4a" stroke="#149a2c" stroke-width="0.5"/><rect x="8.5" y="9.5" width="8.5" height="7.5" fill="#fff" stroke="#d04040" stroke-width="0.8" stroke-dasharray="1.2 0.8"/><path d="M1 6L9 11M1 11L9 6" stroke="#111" stroke-width="0.8"/><circle cx="1.6" cy="5.4" r="1.3" fill="none" stroke="#111" stroke-width="0.7"/><circle cx="1.6" cy="11.6" r="1.3" fill="none" stroke="#111" stroke-width="0.7"/></g>
<g transform="translate(352.5 16.5) scale(1)"><rect x="8.5" y="0.5" width="8.5" height="7.5" fill="#2fbf4a" stroke="#149a2c" stroke-width="0.5"/><rect x="8.5" y="9.5" width="8.5" height="7.5" fill="#3a7ee0" stroke="#1a4ea0" stroke-width="0.6"/><path d="M1 6L9 11M1 11L9 6" stroke="#111" stroke-width="0.8"/><circle cx="1.6" cy="5.4" r="1.3" fill="none" stroke="#111" stroke-width="0.7"/><circle cx="1.6" cy="11.6" r="1.3" fill="none" stroke="#111" stroke-width="0.7"/></g>
<g transform="translate(381.5 18) scale(1)"><path d="M0.5 1.5L5.5 2.5V14L0.5 13Z" fill="#fff" stroke="#6a6a6a" stroke-width="0.8"/><path d="M6.5 2.5L11.5 1.5V13L6.5 14Z" fill="#fff" stroke="#6a6a6a" stroke-width="0.8"/><path d="M3 4V12M9 4V12" stroke="#2fbf4a" stroke-width="0.7"/><path d="M1.5 5L3 6.5L4.5 5M1.5 8L3 9.5L4.5 8M1.5 11L3 12.5L4.5 11M7.5 5L9 6.5L10.5 5M7.5 8L9 9.5L10.5 8M7.5 11L9 12.5L10.5 11" fill="none" stroke="#2fbf4a" stroke-width="0.6"/></g>
<g transform="translate(403.5 18) scale(1)"><path d="M0.5 1.5L5.5 2.5V14L0.5 13Z" fill="#fff" stroke="#6a6a6a" stroke-width="0.8"/><path d="M9.0 2.5L14.0 1.5V13L9.0 14Z" fill="#fff" stroke="#6a6a6a" stroke-width="0.8"/><path d="M3 4V12M11.5 4V12" stroke="#2fbf4a" stroke-width="0.7"/><path d="M1.5 5L3 6.5L4.5 5M1.5 8L3 9.5L4.5 8M1.5 11L3 12.5L4.5 11M10.0 5L11.5 6.5L13.0 5M10.0 8L11.5 9.5L13.0 8M10.0 11L11.5 12.5L13.0 11" fill="none" stroke="#2fbf4a" stroke-width="0.6"/></g>
<g transform="translate(431.5 17.5) scale(1)"><rect x="0.5" y="0.5" width="14" height="14" fill="#9ee6a0" stroke="#2fbf4a" stroke-width="0.8"/><rect x="3" y="3" width="8.5" height="8.5" fill="#f4f4f4" stroke="#333" stroke-width="0.7"/><path d="M7 12L13.5 5.5" stroke="#e07020" stroke-width="1.6"/><path d="M6.5 12.5L7.5 11" stroke="#222" stroke-width="0.8"/></g>
<g transform="translate(470.5 18) scale(1)"><path d="M1 0.5V13.5H14Z" fill="none" stroke="#333" stroke-width="0.9"/><path d="M3 7V11.5H7.5Z" fill="none" stroke="#555" stroke-width="0.6"/><path d="M7 12L14 5" stroke="#e07020" stroke-width="1.6"/><path d="M13.2 4.2L14.8 5.8" stroke="#d03030" stroke-width="1.2"/></g>
<path d="M507.2 18.9L501.3 21.3V30.3L505.6 28.5L513.7 31.5L511.3 24.2" fill="none" stroke="#111" stroke-width="1.1" stroke-linejoin="round"/>
<g transform="translate(546.5 17.8) scale(1)"><path d="M0.5 3L7.5 0.5L14.5 3L7.5 5.5Z" fill="#fde4fd" stroke="#f050f0" stroke-width="0.8"/><path d="M0.5 12L7.5 9.5L14.5 12L7.5 14.5Z" fill="#7ad88a" stroke="#2aa040" stroke-width="0.8"/></g>
<g transform="translate(580.5 17.5) scale(1)"><path d="M6 0.5V6M6 6L1 9M6 6L10 8.5" stroke="#222" stroke-width="0.8"/><circle cx="6" cy="0.8" r="0.8" fill="#222"/><path d="M8 6V10M8 10L4 13M8 10L13 13" stroke="#2fbf4a" stroke-width="1"/><circle cx="8" cy="6" r="0.9" fill="#2fbf4a"/><circle cx="4" cy="13" r="1" fill="#2fbf4a"/><circle cx="13" cy="13" r="1" fill="#2fbf4a"/></g>
<g transform="translate(613.5 18) scale(1)"><path d="M8 1V9M8 9L2 12.5M8 9L12 11" stroke="#2fbf4a" stroke-width="1"/><circle cx="8" cy="1" r="1" fill="#2fbf4a"/><circle cx="2" cy="12.5" r="1.1" fill="#2fbf4a"/><path d="M10.5 7.5L15 12L13 12L14 14.5L13 15L12 12.5L10.5 13.5Z" fill="#111"/></g>
<g transform="translate(653.5 18) scale(1)"><path d="M1 0.5V11M15 0.5V11M1 3.5H15" stroke="#111" stroke-width="0.8"/><path d="M1 3.5L3.5 2.3V4.7ZM15 3.5L12.5 2.3V4.7Z" fill="#111"/><path d="M0.5 13.5H15.5" stroke="#2a7de0" stroke-width="1.3"/></g>
<text x="653" y="51" font-family="Liberation Serif" font-style="italic" font-size="17" fill="#111">A</text>
<g transform="translate(672 19) scale(1)"><path d="M0.5 3.5H3M3 2H9V5H3Z" fill="none" stroke="#333" stroke-width="0.7"/><circle cx="0.8" cy="3.5" r="0.7" fill="#222"/><path d="M13 1.5H18.5L16 6.5ZM18.5 1.5L20 0" fill="none" stroke="#333" stroke-width="0.7"/></g>
<g transform="translate(672 31) scale(1)"><path d="M2 1H9V3.5H2Z M5.5 3.5V7" fill="none" stroke="#333" stroke-width="0.7"/><path d="M13 2H19L16 6.5Z" fill="none" stroke="#333" stroke-width="0.7"/></g>
<g transform="translate(672 42) scale(1)"><path d="M0.5 4H3" stroke="#333" stroke-width="0.7"/><circle cx="5.5" cy="4" r="2.5" fill="none" stroke="#333" stroke-width="0.7"/><path d="M3 4H8" stroke="#333" stroke-width="0.6"/><rect x="12" y="0.5" width="3.5" height="8" rx="1" fill="#eee" stroke="#777" stroke-width="0.6"/><path d="M15.5 4.5H19" stroke="#333" stroke-width="0.7"/><circle cx="19.5" cy="5" r="0.7" fill="#222"/></g>
<g transform="translate(709 16.5) scale(1)"><path d="M3 6Q3 1.5 8 1.5Q11 1.5 12.5 4" fill="none" stroke="#111" stroke-width="1.4"/><path d="M1 4L3 7.5L5.5 4.5Z" fill="#111"/><path d="M14 8Q13 12 9 12.5" fill="none" stroke="#111" stroke-width="1.4"/><path d="M12 7L15.5 5.5L15 9.5Z" fill="#111"/><path d="M1.5 10L4 8.8L6.5 10V12.8L4 14L1.5 12.8Z" fill="#fff" stroke="#555" stroke-width="0.6"/></g>
<g transform="translate(710 36) scale(1)"><path d="M3 3.5Q5 1 8 1Q13.5 1 13.5 7Q13.5 13.5 8 13.5Q2.5 13.5 2.5 8" fill="none" stroke="#111" stroke-width="1.4"/><path d="M0.5 2.5L4.5 1.5L4.5 5.5Z" fill="#111"/><path d="M6.5 5V10L10 7.5Z" fill="#111"/></g>
<g transform="translate(751 19.5) scale(1)"><path d="M0.5 0.5V5M16 0.5V5M0.5 2.8H16" stroke="#333" stroke-width="0.8"/><path d="M0.5 2.8L3 1.6V4ZM16 2.8L13.5 1.6V4Z" fill="#333"/></g>
<g transform="translate(752 27.5) scale(1)"><rect x="0" y="0" width="15" height="4.5" fill="#f0c050" stroke="#c09030" stroke-width="0.5"/><path d="M3 0V1.8M6 0V1.8M9 0V1.8M12 0V1.8" stroke="#7a5a10" stroke-width="0.5"/></g>
<g transform="translate(793 17.5) scale(1)"><rect x="0.5" y="0.5" width="14.5" height="13" fill="#fff" stroke="#444" stroke-width="0.9"/><rect x="0.5" y="0.5" width="14.5" height="2" fill="#8ab0d8"/><circle cx="8" cy="8" r="3.5" fill="none" stroke="#111" stroke-width="1.2"/><path d="M10.5 10.5L13.5 13.5" stroke="#111" stroke-width="1.4"/></g>
<g transform="translate(793.5 37) scale(1)"><path d="M0.5 3L4 0.5L8 2V9L4.5 11L0.5 9.5Z" fill="#f4f4f4" stroke="#666" stroke-width="0.7"/><path d="M5 3.5L8 2.5L9.5 5V10L6 11Z" fill="#a040e0"/><circle cx="9" cy="7" r="3.6" fill="rgba(200,160,255,.3)" stroke="#111" stroke-width="1.1"/><path d="M11.5 9.5L14 12.5" stroke="#111" stroke-width="1.4"/></g>
<path d="M695.2 47.5h3.6l-1.8 2z" fill="#555"/><path d="M695.2 46.3h3.6" stroke="#888" stroke-width="0.5"/>
<path d="M810.2 47.5h3.6l-1.8 2z" fill="#555"/><path d="M810.2 46.3h3.6" stroke="#888" stroke-width="0.5"/>
<path d="M880.2 47.5h3.6l-1.8 2z" fill="#555"/><path d="M880.2 46.3h3.6" stroke="#888" stroke-width="0.5"/>
<path d="M7.5 17v8M9.3 17v8" stroke="#8fb0cf" stroke-width="0.7" stroke-dasharray="0.8 0.9"/>
<path d="M226 17v8M227.8 17v8" stroke="#8fb0cf" stroke-width="0.7" stroke-dasharray="0.8 0.9"/>
<path d="M462.5 17v8M464.3 17v8" stroke="#8fb0cf" stroke-width="0.7" stroke-dasharray="0.8 0.9"/>
<path d="M533 17v8M534.8 17v8" stroke="#8fb0cf" stroke-width="0.7" stroke-dasharray="0.8 0.9"/>
<path d="M649 17v8M650.8 17v8" stroke="#8fb0cf" stroke-width="0.7" stroke-dasharray="0.8 0.9"/>
<path d="M704.5 17v8M706.3 17v8" stroke="#8fb0cf" stroke-width="0.7" stroke-dasharray="0.8 0.9"/>
<path d="M736 17v8M737.8 17v8" stroke="#8fb0cf" stroke-width="0.7" stroke-dasharray="0.8 0.9"/>
<path d="M788 17v8M789.8 17v8" stroke="#8fb0cf" stroke-width="0.7" stroke-dasharray="0.8 0.9"/>
<path d="M819 17v8M820.8 17v8" stroke="#8fb0cf" stroke-width="0.7" stroke-dasharray="0.8 0.9"/>
<rect x="823.2" y="17.7" width="7" height="6.9" fill="#ff0000"/>
<rect x="831.8" y="17.7" width="7" height="6.9" fill="#ffff00"/>
<rect x="839.9" y="17.7" width="7" height="6.9" fill="#0000ff"/>
<rect x="848" y="17.7" width="7" height="6.9" fill="#00ff00"/>
<rect x="823.2" y="25.7" width="7" height="6.9" fill="#00ffff"/>
<rect x="831.8" y="25.7" width="7" height="6.9" fill="#ff00ff"/>
<rect x="847.8" y="25.7" width="7" height="6.9" fill="#000000"/>
<rect x="823.2" y="38" width="7" height="6.9" fill="#eeeeee"/>
<rect x="831.8" y="38" width="7" height="6.9" fill="#ffd0d0"/>
<rect x="839.9" y="38" width="7" height="6.9" fill="#fde6c8"/>
<rect x="848" y="38" width="7" height="6.9" fill="#fff8c8"/>
<rect x="823.2" y="45.8" width="7" height="6.9" fill="#dff0d0"/>
<rect x="831.8" y="45.8" width="7" height="6.9" fill="#d0f8e4"/>
<rect x="839.9" y="45.8" width="7" height="6.9" fill="#c0ecfa"/>
<rect x="848" y="45.8" width="7" height="6.9" fill="#c4d8fc"/>
<path d="M823 35.5H855" stroke="#e4e4e4" stroke-width="0.7"/>
<rect x="856" y="17" width="10" height="8.5" fill="#fff" stroke="#e6e6e6" stroke-width="0.5"/>
<defs><linearGradient id="rb" x1="0" y1="1" x2="1" y2="0"><stop offset="0" stop-color="#ff2020"/><stop offset="0.35" stop-color="#ff60a0"/><stop offset="0.5" stop-color="#202020"/><stop offset="0.65" stop-color="#30a0ff"/><stop offset="1" stop-color="#ffff40"/></linearGradient></defs>
<rect x="856" y="27" width="10" height="8.5" fill="url(#rb)"/>
<path d="M857.8 45.2L863.5 39.5" stroke="#222" stroke-width="2" stroke-linecap="round"/><path d="M863 40L866 37" stroke="#111" stroke-width="2.6" stroke-linecap="round"/><path d="M858.6 44.4L862.4 40.6" stroke="#5ac86a" stroke-width="0.8"/>
<path d="M870 16.4H878" stroke="#111" stroke-width="0.6"/>
<path d="M870 18.6H878" stroke="#111" stroke-width="0.9"/>
<path d="M870 21.2H878" stroke="#111" stroke-width="1.2"/>
<path d="M870 24.2H878" stroke="#111" stroke-width="1.7"/>
<path d="M870 29H878" stroke="#666" stroke-width="0.8"/>
<path d="M870 32H878" stroke="#666" stroke-width="0.8" stroke-dasharray="2 0.8"/>
<path d="M870 34.6H878" stroke="#666" stroke-width="0.8" stroke-dasharray="1.5 1"/>
<path d="M870 37.2H878" stroke="#666" stroke-width="0.8" stroke-dasharray="2.5 1 0.8 1"/>
<path d="M871 49L874 45L876 47L872.5 50.5Z" fill="#2ab040" stroke="#106020" stroke-width="0.5"/><path d="M875 45.5L879 41.5" stroke="#333" stroke-width="1.2"/>
<path d="M891.5 15.5L896.5 20.5M896.5 15.5L891.5 20.5" stroke="#4a7ac0" stroke-width="0.9"/>
<rect x="891.5" y="26.5" width="4" height="3.5" fill="none" stroke="#4a7ac0" stroke-width="0.8"/><path d="M893 25.5h4v3.5" fill="none" stroke="#4a7ac0" stroke-width="0.8"/>
<path d="M891 37.5H896" stroke="#4a7ac0" stroke-width="0.9"/>
<g transform="translate(2.5 2.5) scale(1)"><path d="M8.5 1.8Q5 0 2.5 2.5Q0.3 5 2 8Q3.5 10 6 9.5" fill="none" stroke="#f08a1c" stroke-width="2.2"/><path d="M6 6L9.5 9.5M6.5 9.5L9.5 6" stroke="#777" stroke-width="0.8"/></g>
<g transform="translate(16 3) scale(1)"><rect x="0" y="0" width="8.5" height="8.6" rx="1" fill="#1f4fa0"/><rect x="1.5" y="2" width="5.5" height="2" fill="#fff"/><rect x="2" y="5.8" width="4.5" height="1.8" fill="#fff"/></g>
<g transform="translate(27 2.8) scale(1)"><path d="M0.5 2L3 0.8L4.5 1.6L8.5 1.5V9H1.2Z" fill="#f3e0a0" stroke="#8a7a50" stroke-width="0.6"/><path d="M2 3H8" stroke="#8a7a50" stroke-width="0.5"/></g>
<path d="M37.5 2V12M87.5 2V12M99.5 2V12M141 2V12" stroke="#d6d6d6" stroke-width="0.8"/>
<g transform="translate(39 3) scale(1)"><path d="M1 7Q1 2 5 1.5Q8 1 9 4L7.5 7.5Z" fill="#3cc040"/><path d="M6 4L9.5 7L6.5 8Z" fill="#2aa030"/><rect x="1.2" y="8" width="1.6" height="1.4" fill="#222"/><rect x="3.5" y="8" width="1.6" height="1.4" fill="#222"/></g>
<g transform="translate(55 2.5) scale(1)"><path d="M1 8L3.5 3.5H7L9.5 8Z" fill="#f08020"/><circle cx="5" cy="3.5" r="2.6" fill="#3cc040"/><rect x="1.2" y="8.5" width="1.6" height="1.4" fill="#222"/><rect x="3.5" y="8.5" width="1.6" height="1.4" fill="#222"/></g>
<g transform="translate(71 2.5) scale(1)"><rect x="0" y="0" width="3" height="2.5" fill="#777"/><rect x="3.5" y="0" width="3" height="2.5" fill="#999"/><rect x="7" y="0" width="2" height="2.5" fill="#777"/><rect x="0" y="3.2" width="9" height="2.2" fill="#999"/><rect x="2" y="6" width="7" height="3.5" fill="#888"/><rect x="0" y="7" width="1.6" height="1.4" fill="#222"/><rect x="2.4" y="7" width="1.6" height="1.4" fill="#222"/></g>
<circle cx="51.5" cy="7" r="0.9" fill="#222"/>
<circle cx="67.5" cy="7" r="0.9" fill="#222"/>
<circle cx="83.5" cy="7" r="0.9" fill="#222"/>
<circle cx="112" cy="7" r="0.9" fill="#222"/>
<circle cx="126.5" cy="7" r="0.9" fill="#222"/>
<g transform="translate(89 2.5) scale(1)"><circle cx="4" cy="4" r="3.5" fill="#e8d498" stroke="#9a8a60" stroke-width="0.6"/><circle cx="6" cy="5.5" r="2.8" fill="#d8c088"/><circle cx="7.5" cy="7.8" r="1.8" fill="#fff" stroke="#e03030" stroke-width="1"/></g>
<path d="M103 5L101 7L103 9M101 7H106Q108.5 7 108.5 10" fill="none" stroke="#aaa" stroke-width="1"/>
<path d="M121 5L123 7L121 9M123 7H118Q115.5 7 115.5 10" fill="none" stroke="#aaa" stroke-width="1"/>
<path d="M131 6Q131 3 134.5 3L136.5 3.5M137.5 7Q137.5 11 134 11L132 10.5" fill="none" stroke="#222" stroke-width="1"/><path d="M136 2L138.5 4L135.5 5Z M132.5 12L130 10L133 9Z" fill="#222"/>
<g transform="translate(143 3) scale(1)"><rect x="0.5" y="0.5" width="8" height="8.5" fill="#fff" stroke="#555" stroke-width="0.8"/><rect x="0.5" y="0.5" width="8" height="1.6" fill="#5a8ad0"/><rect x="0.5" y="0.5" width="1.6" height="8.5" fill="#5a8ad0"/></g>
<circle cx="844.6" cy="5.2" r="2.3" fill="none" stroke="#222" stroke-width="1"/><path d="M846.3 7L848.5 9.2" stroke="#222" stroke-width="1.1"/>
<path d="M858 6.3H863.4" stroke="#222" stroke-width="0.9"/>
<rect x="873.5" y="5" width="4.5" height="4.5" fill="none" stroke="#222" stroke-width="0.8"/><path d="M875 5V3.5H879.5V8H878" fill="none" stroke="#222" stroke-width="0.8"/>
<path d="M889.3 3.3L895.5 9.5M895.5 3.3L889.3 9.5" stroke="#222" stroke-width="1"/>
<path d="M1.6 41.5V48" stroke="#f0a040" stroke-width="2.2" stroke-dasharray="1.4 0.5"/><rect x="0.5" y="49" width="2.5" height="2.5" fill="#fafafa" stroke="#ddd" stroke-width="0.4"/>
<rect x="187" y="59.5" width="2.5" height="3.5" fill="#333"/><path d="M186.3 63H190.2M188.25 63V64.5" stroke="#333" stroke-width="0.7"/>
<path d="M195.8 59.5L199.2 63M199.2 59.5L195.8 63" stroke="#222" stroke-width="0.9"/>
<path d="M140 71.2L143.5 74.7M143.5 71.2L140 74.7" stroke="#222" stroke-width="0.9"/>
<path d="M151.5 70V74.5H154.5" fill="none" stroke="#333" stroke-width="1.1"/><path d="M154 73L155.5 74.5L154 76Z" fill="#333"/>
<path d="M163 70Q164.5 71 163.3 72.5Q162.5 74 164 75.5" fill="none" stroke="#777" stroke-width="0.9"/>
<rect x="174.2" y="69.5" width="1.5" height="4.3" fill="#444"/><rect x="174.2" y="75" width="1.5" height="1.3" fill="#444"/>
<text x="182.6" y="76.3" font-family="Liberation Sans" font-weight="bold" font-size="7.5" fill="#111">S</text>
<path d="M194.5 72L196 69.5L197.5 72M194.5 74L196 76.5L197.5 74" fill="none" stroke="#888" stroke-width="0.6"/>
<path d="M13.7 100V239" stroke="#c8c8c8" stroke-width="0.8"/>
<path d="M14 107.6H18.5" stroke="#c8c8c8" stroke-width="0.8"/>
<path d="M14 117.8H18.5" stroke="#c8c8c8" stroke-width="0.8"/>
<path d="M14 127.6H18.5" stroke="#c8c8c8" stroke-width="0.8"/>
<path d="M14 137.7H18.5" stroke="#c8c8c8" stroke-width="0.8"/>
<path d="M14 147.9H18.5" stroke="#c8c8c8" stroke-width="0.8"/>
<path d="M14 158H18.5" stroke="#c8c8c8" stroke-width="0.8"/>
<path d="M14 168.1H18.5" stroke="#c8c8c8" stroke-width="0.8"/>
<path d="M14 178.2H18.5" stroke="#c8c8c8" stroke-width="0.8"/>
<path d="M14 188.3H18.5" stroke="#c8c8c8" stroke-width="0.8"/>
<path d="M14 198.5H18.5" stroke="#c8c8c8" stroke-width="0.8"/>
<path d="M14 208.6H18.5" stroke="#c8c8c8" stroke-width="0.8"/>
<path d="M14 218.7H18.5" stroke="#c8c8c8" stroke-width="0.8"/>
<path d="M14 228.8H18.5" stroke="#c8c8c8" stroke-width="0.8"/>
<path d="M14 239H18.5" stroke="#c8c8c8" stroke-width="0.8"/>
<rect x="11.2" y="95.2" width="5" height="4.8" fill="#fff" stroke="#bdbdbd" stroke-width="0.6"/><circle cx="13.7" cy="97.6" r="0.8" fill="#222"/>
<g transform="translate(23.5 93) scale(1)"><circle cx="2.5" cy="2" r="1.8" fill="#3ab040"/><circle cx="2.5" cy="7" r="1.7" fill="#502a70"/><path d="M5 7.5L7 3.5L9 7.5Z" fill="#d8c030" stroke="#333" stroke-width="0.5"/><rect x="1" y="3.8" width="3" height="1" fill="#333"/></g>
<g transform="translate(23.5 103) scale(1)"><rect x="1" y="1" width="3" height="3" fill="#3a6ab0"/><rect x="1" y="5" width="4" height="4" fill="#ddd" stroke="#888" stroke-width="0.4"/><path d="M9 6H5M6.5 4.5L5 6L6.5 7.5" fill="none" stroke="#3030c0" stroke-width="1.2"/></g>
<g transform="translate(23.5 113) scale(1)"><circle cx="6" cy="3.5" r="2.8" fill="#30b030"/><circle cx="6" cy="3.5" r="1.2" fill="#fff"/><circle cx="1.8" cy="7.5" r="1.1" fill="#2a2ab0"/><path d="M2.5 7L5 5" stroke="#88a" stroke-width="0.5"/></g>
<g transform="translate(23.5 123) scale(1)"><rect x="3" y="1" width="6" height="4.5" fill="#6a4a20"/><path d="M3 2.5H9M5 1V5.5M7 1V5.5" stroke="#c8a060" stroke-width="0.5"/><path d="M1 9L3 6.5M0.8 6L2 7" stroke="#2a2ad0" stroke-width="1"/></g>
<g transform="translate(23.5 133) scale(1)"><rect x="1" y="1" width="8" height="8" rx="1.5" fill="#f070f0"/><path d="M3 3H7V7H3Z" fill="none" stroke="#fff" stroke-width="0.6"/></g>
<g transform="translate(23.5 143) scale(1)"><path d="M5 0.5V9.5M0.5 5H9.5M2 2L8 8M8 2L2 8" stroke="#4a5ae0" stroke-width="0.7" stroke-dasharray="1.2 0.6"/></g>
<g transform="translate(23.5 153) scale(1)"><ellipse cx="5" cy="5" rx="4.2" ry="3.6" fill="#fff" stroke="#4040c0" stroke-width="1"/><path d="M3 3.5L6.5 5L3 6.5Z" fill="#30b030"/><circle cx="8.5" cy="2" r="1" fill="#f040f0"/><circle cx="7.5" cy="8.5" r="1" fill="#f040f0"/></g>
<g transform="translate(18 163) scale(1)"><path d="M0.5 1H4M0.5 5H4M1 1V9M3.5 1V9" stroke="#4a5ad0" stroke-width="0.6"/></g>
<g transform="translate(23.5 163) scale(1)"><path d="M1 1V8.5H9" fill="none" stroke="#555" stroke-width="0.8"/><path d="M2 5L3.5 7.5L8.5 1" fill="none" stroke="#666" stroke-width="0.7"/><path d="M4.5 8L9.5 1.5" stroke="#e8b020" stroke-width="1.5"/><path d="M8.8 2.2L9.8 0.8" stroke="#c02020" stroke-width="1.3"/></g>
<g transform="translate(23.5 173.5) scale(1)"><path d="M1 3.5H4M1 5.5H4" stroke="#555" stroke-width="0.8"/><path d="M3.5 2Q6 0.5 9 2.5L7 4" fill="none" stroke="#2a3ad0" stroke-width="1.3"/><path d="M3.5 7.5Q6 9 9 7L7 5.5" fill="none" stroke="#2a3ad0" stroke-width="1.3"/></g>
<g transform="translate(23.5 183.5) scale(1)"><path d="M1 1V8.5H9" fill="none" stroke="#555" stroke-width="0.8"/><path d="M2 5L3.5 7.5L8.5 1" fill="none" stroke="#666" stroke-width="0.7"/><path d="M4.5 8L9.5 1.5" stroke="#e8b020" stroke-width="1.5"/><path d="M8.8 2.2L9.8 0.8" stroke="#c02020" stroke-width="1.3"/></g>
<g transform="translate(23.5 193.5) scale(1)"><path d="M1 3.5H4M1 5.5H4" stroke="#555" stroke-width="0.8"/><path d="M3.5 2Q6 0.5 9 2.5L7 4" fill="none" stroke="#2a3ad0" stroke-width="1.3"/><path d="M3.5 7.5Q6 9 9 7L7 5.5" fill="none" stroke="#2a3ad0" stroke-width="1.3"/></g>
<g transform="translate(23.5 203.5) scale(1)"><path d="M1 1V8.5H9" fill="none" stroke="#555" stroke-width="0.8"/><path d="M2 5L3.5 7.5L8.5 1" fill="none" stroke="#666" stroke-width="0.7"/><path d="M4.5 8L9.5 1.5" stroke="#e8b020" stroke-width="1.5"/><path d="M8.8 2.2L9.8 0.8" stroke="#c02020" stroke-width="1.3"/></g>
<g transform="translate(23.5 213.5) scale(1)"><path d="M1 1V8.5H9" fill="none" stroke="#555" stroke-width="0.8"/><path d="M2 5L3.5 7.5L8.5 1" fill="none" stroke="#666" stroke-width="0.7"/><path d="M4.5 8L9.5 1.5" stroke="#e8b020" stroke-width="1.5"/><path d="M8.8 2.2L9.8 0.8" stroke="#c02020" stroke-width="1.3"/></g>
<g transform="translate(23.5 224) scale(1)"><path d="M1 3.5H4M1 5.5H4" stroke="#555" stroke-width="0.8"/><path d="M3.5 2Q6 0.5 9 2.5L7 4" fill="none" stroke="#2a3ad0" stroke-width="1.3"/><path d="M3.5 7.5Q6 9 9 7L7 5.5" fill="none" stroke="#2a3ad0" stroke-width="1.3"/></g>
<g transform="translate(23.5 234) scale(1)"><path d="M1 1V8.5H9" fill="none" stroke="#555" stroke-width="0.8"/><path d="M2 5L3.5 7.5L8.5 1" fill="none" stroke="#666" stroke-width="0.7"/><path d="M4.5 8L9.5 1.5" stroke="#e8b020" stroke-width="1.5"/><path d="M8.8 2.2L9.8 0.8" stroke="#c02020" stroke-width="1.3"/></g>
<text x="18.5" y="201.2" font-family="Liberation Sans" font-weight="bold" font-size="6.5" fill="#111">S</text>
<path d="M19 235.5V240.5H22.5" fill="none" stroke="#1a2ab0" stroke-width="1.1"/><path d="M22 239L23.5 240.5L22 242Z" fill="#1a2ab0"/>
<path d="M284.5 66L284.5 73.5L286.3 72L287.8 74.5L288.8 74L287.5 71.5L289.5 71.2Z" fill="#111"/><path d="M290.5 67.5L291.8 66L293 67.5L291.8 69Z" fill="none" stroke="#e03030" stroke-width="0.6"/>
<ellipse cx="299" cy="70" rx="4" ry="3.5" fill="none" stroke="#e04040" stroke-width="0.8"/><path d="M297.5 67V73" stroke="#e04040" stroke-width="0.6"/><path d="M300.5 69V74L301.8 73L303 74.8L303.7 74.3L302.6 72.6L304 72.3Z" fill="#111"/>
<path d="M306 65V75" stroke="#ddd" stroke-width="0.7"/>
<path d="M307.5 71Q309 67 313 66L315 69L311 74Z" fill="#2aa030" stroke="#116020" stroke-width="0.5"/><path d="M312.5 69V74L313.8 73L315 74.8L315.7 74.3L314.6 72.6L316 72.3Z" fill="#111"/>
<path d="M323.5 66L331 67M325 66L330 72M329 66L325 72" stroke="#555" stroke-width="0.6"/><circle cx="325" cy="73" r="1.5" fill="none" stroke="#e04040" stroke-width="0.8"/><path d="M327 72L332 68" stroke="#222" stroke-width="1.2"/>
<rect x="339.5" y="66" width="8" height="8" fill="none" stroke="#e06060" stroke-width="0.7"/><path d="M344 68.5V74L345.2 73L346.3 74.8L347 74.3L346 72.6L347.3 72.3Z" fill="#111"/><circle cx="341.5" cy="72.5" r="0.6" fill="#111"/>
<rect x="355.5" y="66" width="8" height="8" fill="none" stroke="#555" stroke-width="0.7"/><path d="M360 68.5V74L361.2 73L362.3 74.8L363 74.3L362 72.6L363.3 72.3Z" fill="#111"/>
<path d="M318.0 69.5h3l-1.5 1.8z" fill="#222"/>
<path d="M334.5 69.5h3l-1.5 1.8z" fill="#222"/>
<path d="M350.5 69.5h3l-1.5 1.8z" fill="#222"/>
<path d="M366.5 69.5h3l-1.5 1.8z" fill="#222"/>
<path d="M469.5 69.5h3l-1.5 1.8z" fill="#222"/>
<path d="M486.5 69.5h3l-1.5 1.8z" fill="#222"/>
<circle cx="395" cy="69" r="2.9" fill="#555" stroke="#222" stroke-width="0.5"/><rect x="393.7" y="71.5" width="2.6" height="2.5" fill="#111"/>
<circle cx="406" cy="69" r="2.9" fill="#f8f000" stroke="#8080ff" stroke-width="0.5"/><rect x="404.7" y="71.5" width="2.6" height="2.5" fill="#111"/>
<circle cx="417" cy="69" r="2.9" fill="#f0e000" stroke="#6060c0" stroke-width="0.5"/><rect x="415.7" y="71.5" width="2.6" height="2.5" fill="#111"/>
<path d="M418 67L416 71" stroke="#3a3aaa" stroke-width="0.7"/>
<circle cx="428.5" cy="69" r="2.9" fill="#eee" stroke="#ccc" stroke-width="0.6"/><rect x="427.2" y="71.5" width="2.6" height="2.5" fill="#ccc"/>
<path d="M437 70L440 67.5V69H444V71H440V72.5Z" fill="#d8d8d8"/><path d="M455 70L452 67.5V69H448V71H452V72.5Z" fill="#d8d8d8"/>
<path d="M457 65V75" stroke="#ccc" stroke-width="0.7"/>
<path d="M458.5 68L462.5 66L467 68V73L462.5 75L458.5 73Z" fill="#8a7ae0" stroke="#3a3ab0" stroke-width="0.5"/><path d="M458.5 68L462.5 70L467 68M462.5 70V75" fill="none" stroke="#fff" stroke-width="0.6"/>
<path d="M475.5 68L479 66L483 68V74H475.5Z" fill="#e8d8b0" stroke="#555" stroke-width="0.6"/><circle cx="480" cy="71" r="2" fill="none" stroke="#222" stroke-width="0.8"/><path d="M481.5 72.5L484 75" stroke="#222" stroke-width="1"/>
<path d="M512 69Q512 66 514.8 66Q517.8 66 517.8 69.5Q517.8 73 514 73.2" fill="none" stroke="#111" stroke-width="1.1"/><path d="M510.5 68L512 70.5L513.8 68.5Z" fill="#111"/>
<circle cx="523" cy="67.5" r="1.6" fill="#e03030"/><path d="M523 69V73" stroke="#e03030" stroke-width="0.8"/><path d="M525.5 71h3l-1.5 2.5z" fill="none" stroke="#333" stroke-width="0.5"/>
<path d="M532 65V75M544 65V75M555 65V75" stroke="#ddd" stroke-width="0.7"/>
<path d="M534 70L536.5 67L538.5 70" fill="none" stroke="#333" stroke-width="0.7"/><path d="M537.5 71h3l-1.5 2.5z" fill="none" stroke="#333" stroke-width="0.5"/>
<circle cx="547.5" cy="67.5" r="1.7" fill="#2ab040"/><rect x="546" y="71" width="3" height="3" fill="#2ab040"/><path d="M551 66V74M550 67.5L551 66L552 67.5M550 72.5L551 74L552 72.5" fill="none" stroke="#333" stroke-width="0.6"/>
<rect x="556" y="64.5" width="10.5" height="11" fill="#f6c088" stroke="#e8a060" stroke-width="0.5"/>
<rect x="567" y="64.5" width="10.5" height="11" fill="#f6c088" stroke="#e8a060" stroke-width="0.5"/>
<rect x="578" y="64.5" width="10.5" height="11" fill="#f6c088" stroke="#e8a060" stroke-width="0.5"/>
<rect x="589" y="64.5" width="11" height="11" fill="#f6c088" stroke="#e8a060" stroke-width="0.5"/>
<path d="M557.5 71L561 67L565 69L562 73Z" fill="#3ab040" stroke="#116020" stroke-width="0.5"/>
<path d="M568.5 73Q570 67 575 66" fill="none" stroke="#222" stroke-width="0.8"/><path d="M570.5 73L573 69" stroke="#555" stroke-width="0.6"/>
<path d="M579 70L583 67L587 70M580 69V73" fill="none" stroke="#333" stroke-width="0.8"/>
<path d="M590.5 72L595 67L599 68L595 73Z" fill="#f8d8f8" stroke="#e040e0" stroke-width="0.7"/>
<path d="M562 71.5h3l-1.5 2.5z" fill="none" stroke="#333" stroke-width="0.5"/>
<path d="M573 71.5h3l-1.5 2.5z" fill="none" stroke="#333" stroke-width="0.5"/>
<path d="M584 71.5h3l-1.5 2.5z" fill="none" stroke="#333" stroke-width="0.5"/>
<path d="M596 71.5h3l-1.5 2.5z" fill="none" stroke="#333" stroke-width="0.5"/>
<path d="M603 66H609L608 69H604Z" fill="#e05050"/><path d="M606 69V73" stroke="#e05050" stroke-width="0.8"/><path d="M607.5 71h3l-1.5 2.5z" fill="none" stroke="#333" stroke-width="0.5"/>
<rect x="613" y="64.5" width="11.5" height="11" fill="#f6c088" stroke="#e8a060" stroke-width="0.5"/><path d="M614.5 66H623M615 66L617 69M622.5 66L620.5 69M616 73L619 69L621 73" fill="none" stroke="#333" stroke-width="0.7"/>
<path d="M628 68L632 71" stroke="#333" stroke-width="0.7" stroke-dasharray="1 0.6"/><rect x="627.5" y="67" width="1.8" height="1.8" fill="#2ab040"/><path d="M631.5 71.5h3l-1.5 2.5z" fill="none" stroke="#333" stroke-width="0.5"/><path d="M636 69L637.5 70.3L636 71.6Z" fill="#111"/>
<path d="M303 459.2L270 459.7" stroke="#22b020" stroke-width="3.2"/><path d="M258.3 459.7L270.5 454.9L270.5 464.6Z" fill="#22b020"/>
<path d="M306.5 462L308 490" stroke="#ee1010" stroke-width="3.2"/><path d="M308.3 501.4L303.4 489L313 488.5Z" fill="#ee1010"/>
<path d="M303 466A3.5 4 0 0 0 302.5 474L304.5 474V466Z" fill="#1a2ad0"/>
<circle cx="305.6" cy="457.6" r="4.6" fill="#f4f04a" stroke="#e8e090" stroke-width="0.6"/>
<text x="240.3" y="466.2" font-family="Liberation Sans" font-weight="bold" font-size="8.3" fill="#26a824">Y</text>
<text x="296" y="485.2" font-family="Liberation Sans" font-weight="bold" font-size="7.8" fill="#2a34d8">Z</text>
<text x="304" y="519.2" font-family="Liberation Sans" font-weight="bold" font-size="7.8" fill="#e41818">X</text>
<path d="M731.5 469.5H740.5M736 465V474" stroke="#222" stroke-width="0.8"/>
</svg>
</body></html>
